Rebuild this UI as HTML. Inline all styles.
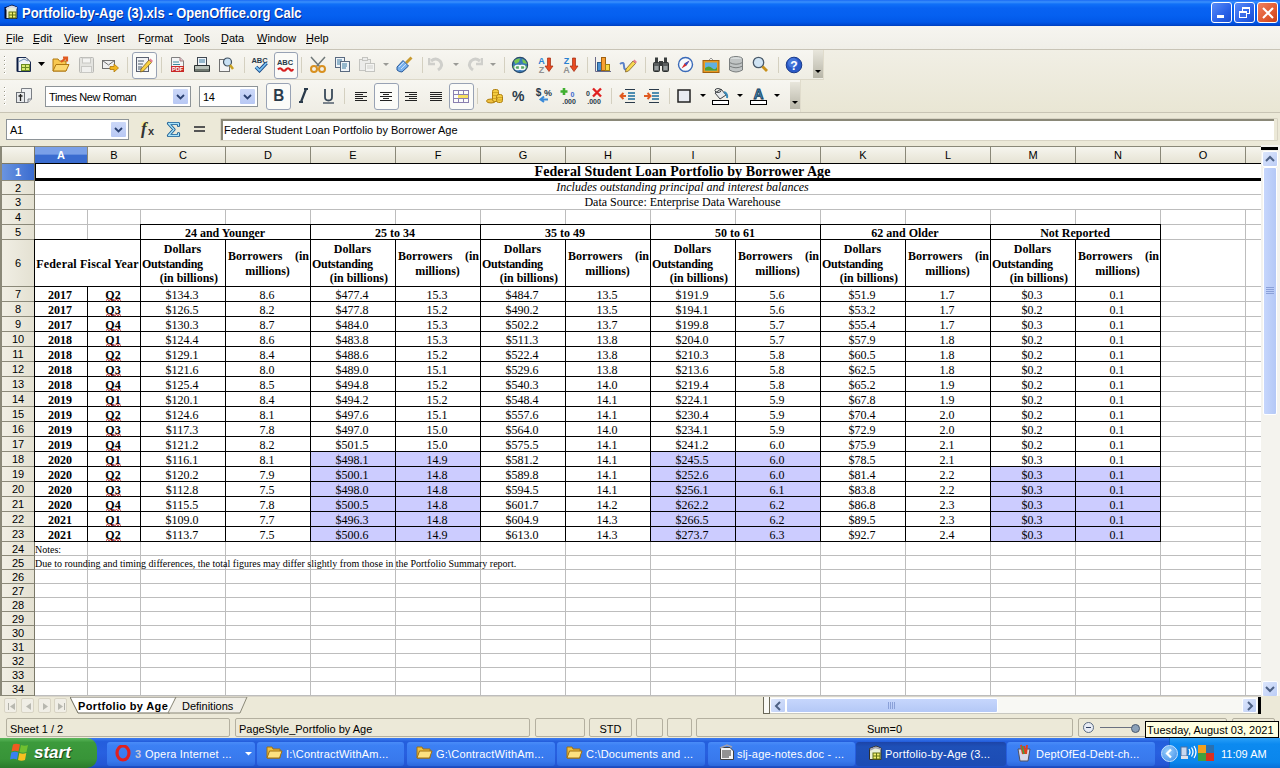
<!DOCTYPE html><html><head><meta charset="utf-8"><style>
*{margin:0;padding:0;box-sizing:border-box}
body{width:1280px;height:768px;overflow:hidden;position:relative;background:#ece9d8;font-family:"Liberation Sans",sans-serif;font-size:11px;color:#000}
.a{position:absolute}
.ser{font-family:"Liberation Serif",serif}
.t{position:absolute;white-space:nowrap;line-height:1}
</style></head><body>
<div class="a" style="left:0;top:0;width:1280px;height:26px;background:linear-gradient(#1a6af4 0px,#3a90fc 2px,#1070f8 4px,#0862f2 8px,#0560f0 60%,#0258e8 85%,#0048d0 96%,#003cb8 100%)"></div>
<div class="t" style="left:22px;top:6px;font-size:14px;font-weight:bold;color:#fff;text-shadow:1px 1px #0a2a8a;transform:scaleX(0.926);transform-origin:0 0">Portfolio-by-Age (3).xls - OpenOffice.org Calc</div>
<svg class="a" style="left:4px;top:3px" width="15" height="17"><path d="M1.5 4.5L8 2L13 4V15.5H1.5Z" fill="#e8f0d8" stroke="#0a1a50"/><path d="M1.5 4V15.5" stroke="#000a30" stroke-width="2"/><path d="M2 6L7 3.5L13 5" stroke="#d0d8e8" stroke-width="1.5" fill="none"/><rect x="5" y="9" width="7" height="6" fill="#f0f070" stroke="#607010"/><path d="M8.5 9V15M5 12H12" stroke="#607010"/></svg>
<div class="a" style="left:1211px;top:2px;width:21px;height:21px;border:1px solid #fff;border-radius:3px;background:linear-gradient(135deg,#5a8cf8,#2a62e8 60%,#1a4ed0)"><div class="a" style="left:5px;top:12px;width:7px;height:3px;background:#fff"></div></div>
<div class="a" style="left:1234px;top:2px;width:21px;height:21px;border:1px solid #fff;border-radius:3px;background:linear-gradient(135deg,#5a8cf8,#2a62e8 60%,#1a4ed0)"><div class="a" style="left:7px;top:4px;width:8px;height:7px;border:1px solid #fff;border-top-width:2px"></div><div class="a" style="left:4px;top:8px;width:8px;height:7px;border:1px solid #fff;border-top-width:2px;background:#3a6ce8"></div></div>
<div class="a" style="left:1257px;top:2px;width:21px;height:21px;border:1px solid #fff;border-radius:3px;background:linear-gradient(135deg,#f08060,#e05a30 60%,#c84018)"><svg class="a" style="left:4px;top:4px" width="12" height="12"><path d="M1 1L11 11M11 1L1 11" stroke="#fff" stroke-width="2"/></svg></div>
<div class="a" style="left:0;top:26px;width:1280px;height:24px;background:linear-gradient(#f6f5f0,#f0efe8);border-bottom:1px solid #c8c4b6"></div>
<div class="t" style="left:6px;top:33px;font-size:11px;color:#000">File</div>
<div class="a" style="left:6px;top:43px;width:6px;height:1px;background:#000"></div>
<div class="t" style="left:33px;top:33px;font-size:11px;color:#000">Edit</div>
<div class="a" style="left:33px;top:43px;width:6px;height:1px;background:#000"></div>
<div class="t" style="left:64px;top:33px;font-size:11px;color:#000">View</div>
<div class="a" style="left:64px;top:43px;width:6px;height:1px;background:#000"></div>
<div class="t" style="left:97px;top:33px;font-size:11px;color:#000">Insert</div>
<div class="a" style="left:97px;top:43px;width:3px;height:1px;background:#000"></div>
<div class="t" style="left:138px;top:33px;font-size:11px;color:#000">Format</div>
<div class="a" style="left:145px;top:43px;width:6px;height:1px;background:#000"></div>
<div class="t" style="left:184px;top:33px;font-size:11px;color:#000">Tools</div>
<div class="a" style="left:184px;top:43px;width:6px;height:1px;background:#000"></div>
<div class="t" style="left:221px;top:33px;font-size:11px;color:#000">Data</div>
<div class="a" style="left:221px;top:43px;width:6px;height:1px;background:#000"></div>
<div class="t" style="left:257px;top:33px;font-size:11px;color:#000">Window</div>
<div class="a" style="left:257px;top:43px;width:9px;height:1px;background:#000"></div>
<div class="t" style="left:306px;top:33px;font-size:11px;color:#000">Help</div>
<div class="a" style="left:306px;top:43px;width:6px;height:1px;background:#000"></div>
<div class="a" style="left:0;top:50px;width:1280px;height:63px;background:linear-gradient(#f1efe5,#e9e6d4)"></div>
<div class="a" style="left:0;top:50px;width:824px;height:30px;background:linear-gradient(#f7f6f1,#efede4);border-bottom:1px solid #dcd8c8;border-right:1px solid #e0dccc"></div>
<div class="a" style="left:0;top:80px;width:801px;height:32px;background:linear-gradient(#f7f6f1,#efede4);border-right:1px solid #e0dccc"></div>
<div class="a" style="left:0;top:112px;width:1280px;height:1px;background:#c8c4b4"></div>
<div class="a" style="left:4px;top:56px;width:2px;height:2px;background:#9a9888;border-right:1px solid #fff;border-bottom:1px solid #fff"></div>
<div class="a" style="left:4px;top:60px;width:2px;height:2px;background:#9a9888;border-right:1px solid #fff;border-bottom:1px solid #fff"></div>
<div class="a" style="left:4px;top:64px;width:2px;height:2px;background:#9a9888;border-right:1px solid #fff;border-bottom:1px solid #fff"></div>
<div class="a" style="left:4px;top:68px;width:2px;height:2px;background:#9a9888;border-right:1px solid #fff;border-bottom:1px solid #fff"></div>
<div class="a" style="left:4px;top:72px;width:2px;height:2px;background:#9a9888;border-right:1px solid #fff;border-bottom:1px solid #fff"></div>
<div class="a" style="left:4px;top:87px;width:2px;height:2px;background:#9a9888;border-right:1px solid #fff;border-bottom:1px solid #fff"></div>
<div class="a" style="left:4px;top:91px;width:2px;height:2px;background:#9a9888;border-right:1px solid #fff;border-bottom:1px solid #fff"></div>
<div class="a" style="left:4px;top:95px;width:2px;height:2px;background:#9a9888;border-right:1px solid #fff;border-bottom:1px solid #fff"></div>
<div class="a" style="left:4px;top:99px;width:2px;height:2px;background:#9a9888;border-right:1px solid #fff;border-bottom:1px solid #fff"></div>
<div class="a" style="left:4px;top:103px;width:2px;height:2px;background:#9a9888;border-right:1px solid #fff;border-bottom:1px solid #fff"></div>
<div class="a" style="left:813px;top:50px;width:10px;height:28px;background:linear-gradient(#e8e6dc,#b8b6a8)"><div class="a" style="left:2px;top:20px;width:0;height:0;border-left:3px solid transparent;border-right:3px solid transparent;border-top:3px solid #000"></div></div>
<div class="a" style="left:790px;top:82px;width:10px;height:27px;background:linear-gradient(#e8e6dc,#b8b6a8)"><div class="a" style="left:2px;top:19px;width:0;height:0;border-left:3px solid transparent;border-right:3px solid transparent;border-top:3px solid #000"></div></div>
<div class="a" style="left:127px;top:57px;width:1px;height:16px;background:#d4d0c0"></div>
<div class="a" style="left:161px;top:57px;width:1px;height:16px;background:#d4d0c0"></div>
<div class="a" style="left:244px;top:57px;width:1px;height:16px;background:#d4d0c0"></div>
<div class="a" style="left:301px;top:57px;width:1px;height:16px;background:#d4d0c0"></div>
<div class="a" style="left:422px;top:57px;width:1px;height:16px;background:#d4d0c0"></div>
<div class="a" style="left:504px;top:57px;width:1px;height:16px;background:#d4d0c0"></div>
<div class="a" style="left:587px;top:57px;width:1px;height:16px;background:#d4d0c0"></div>
<div class="a" style="left:645px;top:57px;width:1px;height:16px;background:#d4d0c0"></div>
<div class="a" style="left:778px;top:57px;width:1px;height:16px;background:#d4d0c0"></div>
<div class="a" style="left:344px;top:88px;width:1px;height:16px;background:#d4d0c0"></div>
<div class="a" style="left:477px;top:88px;width:1px;height:16px;background:#d4d0c0"></div>
<div class="a" style="left:611px;top:88px;width:1px;height:16px;background:#d4d0c0"></div>
<div class="a" style="left:669px;top:88px;width:1px;height:16px;background:#d4d0c0"></div>
<div class="a" style="left:132px;top:52px;width:25px;height:27px;border:1px solid #98a2b4;border-radius:3px;background:#fbfbf8"></div>
<div class="a" style="left:274px;top:52px;width:24px;height:27px;border:1px solid #98a2b4;border-radius:3px;background:#fbfbf8"></div>
<div class="a" style="left:266px;top:83px;width:25px;height:27px;border:1px solid #98a2b4;border-radius:3px;background:#fbfbf8"></div>
<div class="a" style="left:374px;top:83px;width:25px;height:27px;border:1px solid #98a2b4;border-radius:3px;background:#fbfbf8"></div>
<div class="a" style="left:449px;top:83px;width:25px;height:27px;border:1px solid #98a2b4;border-radius:3px;background:#fbfbf8"></div>
<div class="a" style="left:45px;top:86px;width:146px;height:21px;background:#fff;border:1px solid #8e9498"></div>
<div class="t" style="left:49px;top:92px;font-size:11px;letter-spacing:-0.4px">Times New Roman</div>
<div class="a" style="left:173px;top:89px;width:15px;height:15px;background:linear-gradient(#ccd8f8,#b8c8f4);border-radius:1px"><svg class="a" style="left:3px;top:5px" width="9" height="6"><path d="M1 1L4.5 4.5L8 1" stroke="#2a4070" stroke-width="1.8" fill="none"/></svg></div>
<div class="a" style="left:199px;top:86px;width:59px;height:21px;background:#fff;border:1px solid #8e9498"></div>
<div class="t" style="left:203px;top:92px;font-size:11px;letter-spacing:-0.4px">14</div>
<div class="a" style="left:240px;top:89px;width:15px;height:15px;background:linear-gradient(#ccd8f8,#b8c8f4);border-radius:1px"><svg class="a" style="left:3px;top:5px" width="9" height="6"><path d="M1 1L4.5 4.5L8 1" stroke="#2a4070" stroke-width="1.8" fill="none"/></svg></div>
<div class="a" style="left:0;top:113px;width:1280px;height:34px;background:#ece9d8"></div>
<div class="a" style="left:6px;top:119px;width:123px;height:21px;background:#fff;border:1px solid #8e9498"></div>
<div class="t" style="left:10px;top:125px;font-size:11px;letter-spacing:-0.4px">A1</div>
<div class="a" style="left:111px;top:122px;width:15px;height:15px;background:linear-gradient(#ccd8f8,#b8c8f4);border-radius:1px"><svg class="a" style="left:3px;top:5px" width="9" height="6"><path d="M1 1L4.5 4.5L8 1" stroke="#2a4070" stroke-width="1.8" fill="none"/></svg></div>
<div class="a" style="left:220px;top:118px;width:57px;height:22px"></div>
<div class="a" style="left:220px;top:118px;width:1058px;height:23px;border:1px solid #d8d4c4;border-radius:1px"></div><div class="a" style="left:221px;top:119px;width:1053px;height:21px;background:#fff;border-top:2px solid #8a8878;border-left:2px solid #8a8878"></div>
<div class="t" style="left:224px;top:125px;font-size:11px">Federal Student Loan Portfolio by Borrower Age</div>
<div class="a" style="left:141px;top:121px;width:7px;height:7px;border-radius:50%;background:radial-gradient(#f8f070,rgba(248,240,112,0))"></div><div class="t ser" style="left:141px;top:120px;font-size:17px;font-style:italic;font-weight:bold;color:#333">f</div><div class="t" style="left:148px;top:126px;font-size:11px;font-weight:bold;color:#333">x</div>
<svg class="a" style="left:165px;top:121px" width="17" height="17"><path d="M3.5 2.5H13.5V4.5M3.5 2.5L9 8.5L3.5 14.5H13.5V12.5" stroke="#1a5a90" stroke-width="3.2" fill="none" stroke-linejoin="round" stroke-linecap="round"/><path d="M3.5 2.5H13.5V4.5M3.5 2.5L9 8.5L3.5 14.5H13.5V12.5" stroke="#a8e4fa" stroke-width="1.3" fill="none" stroke-linejoin="round" stroke-linecap="round"/></svg>
<div class="a" style="left:194px;top:126px;width:11px;height:2px;background:#555"></div><div class="a" style="left:194px;top:130px;width:11px;height:2px;background:#555"></div>
<svg class="a" style="left:16px;top:56px" width="16" height="17" viewBox="0 0 16 17"><path d="M1.5 1.5H10L14.5 6V15.5H1.5Z" fill="#eef2f6" stroke="#1a2a50"/><path d="M1.5 1.5V15.5" stroke="#0a1a40" stroke-width="2"/><path d="M2 6L8 3L12 5" stroke="#7090b0" fill="none"/><rect x="5.5" y="8.5" width="8" height="6" fill="#d8ea70" stroke="#6a8a20"/><path d="M9.5 8.5V14.5M5.5 11.5H13.5" stroke="#6a8a20"/></svg>
<svg class="a" style="left:38px;top:62px" width="7" height="5" viewBox="0 0 7 5"><path d="M0 0H7L3.5 4Z" fill="#000"/></svg>
<svg class="a" style="left:52px;top:56px" width="18" height="17" viewBox="0 0 18 17"><path d="M1 3H6L7.5 5H14V15H1Z" fill="#f8c850" stroke="#b07810"/><path d="M1 15L4 8.5H17L14 15Z" fill="#fcd870" stroke="#b07810"/><path d="M9 6L14.5 1.5M11 1.5H15V5.5" stroke="#e05a20" stroke-width="2.2" fill="none"/></svg>
<svg class="a" style="left:79px;top:57px" width="15" height="16" viewBox="0 0 15 16"><rect x="0.5" y="0.5" width="14" height="15" rx="1" fill="#e4e4e0" stroke="#b8b8b4"/><rect x="3.5" y="1" width="8" height="5" fill="#f4f4f2" stroke="#c8c8c4"/><rect x="2.5" y="9.5" width="10" height="6" fill="#f0f0ee" stroke="#c8c8c4"/></svg>
<svg class="a" style="left:102px;top:60px" width="18" height="12" viewBox="0 0 18 12"><rect x="0.5" y="0.5" width="12" height="8" fill="#f0f0f0" stroke="#707070"/><path d="M0.5 0.5L6.5 5L12.5 0.5" stroke="#707070" fill="none"/><path d="M8 6.5H12V4L16.5 8L12 12V9.5H8Z" fill="#f4b820" stroke="#b07808" stroke-width="0.8"/></svg>
<svg class="a" style="left:135px;top:56px" width="18" height="17" viewBox="0 0 18 17"><rect x="1.5" y="1.5" width="12" height="14" fill="#f0f2f4" stroke="#5a6070"/><path d="M3 5H9M3 8H8M3 11H7M3 13H7" stroke="#4a5a6a"/><path d="M6 13L14 4L16.5 6.5L8.5 15L5.5 16Z" fill="#f8d040" stroke="#806020" stroke-width="0.8"/><path d="M14 4L15.5 2.5L18 5L16.5 6.5Z" fill="#e88090"/></svg>
<svg class="a" style="left:170px;top:56px" width="15" height="17" viewBox="0 0 15 17"><path d="M1.5 1.5H10L13.5 5V15.5H1.5Z" fill="#f4f4f4" stroke="#808080"/><path d="M10 1.5V5H13.5" fill="#e8c0c8" stroke="#a08080"/><path d="M3 6H9M3 8.5H10" stroke="#3a8aa0"/><rect x="1" y="10" width="13" height="6" fill="#c82828"/><text x="7.5" y="15" font-size="5.5" font-weight="bold" fill="#fff" text-anchor="middle" font-family="Liberation Sans">PDF</text></svg>
<svg class="a" style="left:193px;top:56px" width="18" height="17" viewBox="0 0 18 17"><rect x="4.5" y="1.5" width="9" height="8" fill="#f0f4f8" stroke="#404850"/><path d="M6 4H12M6 6H12" stroke="#3a7aa0"/><path d="M1.5 9.5H16.5V15.5H1.5Z" fill="#b8c0b8" stroke="#2a3030"/><rect x="2" y="13" width="14" height="2.5" fill="#707870"/></svg>
<svg class="a" style="left:218px;top:56px" width="16" height="17" viewBox="0 0 16 17"><rect x="1.5" y="3.5" width="10" height="12" fill="#f4f4f4" stroke="#707070"/><circle cx="9.5" cy="6" r="4" fill="#c8e0f4" stroke="#405060" stroke-width="1.2"/><path d="M12 9L15 13" stroke="#c8a020" stroke-width="2.5"/></svg>
<svg class="a" style="left:251px;top:56px" width="18" height="17" viewBox="0 0 18 17"><text x="8.5" y="7" font-size="7.5" font-weight="bold" fill="#2a3a4a" text-anchor="middle" font-family="Liberation Sans">ABC</text><path d="M5 11L8.5 14.5L15.5 7" stroke="#1a4a8a" stroke-width="3.6" fill="none"/><path d="M5 11L8.5 14.5L15.5 7" stroke="#7ac4f4" stroke-width="1.8" fill="none"/></svg>
<svg class="a" style="left:276px;top:57px" width="18" height="16" viewBox="0 0 18 16"><text x="9" y="8" font-size="7.5" font-weight="bold" fill="#2a3a4a" text-anchor="middle" font-family="Liberation Sans">ABC</text><path d="M2 12.5Q4 10 6 12.5T10 12.5T14 12.5T17 12" stroke="#d82020" stroke-width="2.2" fill="none"/></svg>
<svg class="a" style="left:309px;top:56px" width="18" height="17" viewBox="0 0 18 17"><path d="M2 1L11 11M16 1L7 11" stroke="#707878" stroke-width="1.5"/><circle cx="5" cy="13" r="3" fill="none" stroke="#d89020" stroke-width="2"/><circle cx="13" cy="13" r="3" fill="none" stroke="#d89020" stroke-width="2"/></svg>
<svg class="a" style="left:334px;top:56px" width="17" height="17" viewBox="0 0 17 17"><rect x="1.5" y="1.5" width="9" height="10" fill="#f0f4f8" stroke="#5a6a80"/><path d="M3 4H8M3 6H8M3 8H7" stroke="#3a7aa0"/><rect x="6.5" y="5.5" width="9" height="10" fill="#f0f4f8" stroke="#5a6a80"/><path d="M8 8H13M8 10H13M8 12H12" stroke="#3a7aa0"/></svg>
<svg class="a" style="left:358px;top:56px" width="18" height="17" viewBox="0 0 18 17"><rect x="1.5" y="3.5" width="11" height="11" fill="#ececea" stroke="#c4c4c0"/><rect x="4.5" y="1.5" width="5" height="3" fill="#ececea" stroke="#c4c4c0"/><rect x="7.5" y="7.5" width="9" height="8" fill="#f4f4f2" stroke="#c4c4c0"/><path d="M9 10H15M9 12H15" stroke="#d0d0cc"/></svg>
<svg class="a" style="left:383px;top:63px" width="6" height="4" viewBox="0 0 6 4"><path d="M0 0H6L3 3Z" fill="#9a9a96"/></svg>
<svg class="a" style="left:396px;top:56px" width="18" height="17" viewBox="0 0 18 17"><path d="M10 7L15.5 1.5" stroke="#c89a30" stroke-width="2.8"/><path d="M1 11L7 4.5L12.5 10L6 16Q3 16 1 14Z" fill="#78b0ec" stroke="#2a5a9a"/><path d="M3 11L8 6M5 13L10 8" stroke="#c8e0fa"/></svg>
<svg class="a" style="left:428px;top:56px" width="18" height="17" viewBox="0 0 18 17"><path d="M3 5Q8 1 12 5Q16 10 10 14" stroke="#cfcfcb" stroke-width="3" fill="none"/><path d="M1 2V8H7" stroke="#cfcfcb" stroke-width="2.5" fill="none"/></svg>
<svg class="a" style="left:453px;top:63px" width="6" height="4" viewBox="0 0 6 4"><path d="M0 0H6L3 3Z" fill="#9a9a96"/></svg>
<svg class="a" style="left:465px;top:56px" width="18" height="17" viewBox="0 0 18 17"><path d="M15 5Q10 1 6 5Q2 10 8 14" stroke="#cfcfcb" stroke-width="3" fill="none"/><path d="M17 2V8H11" stroke="#cfcfcb" stroke-width="2.5" fill="none"/></svg>
<svg class="a" style="left:490px;top:63px" width="6" height="4" viewBox="0 0 6 4"><path d="M0 0H6L3 3Z" fill="#9a9a96"/></svg>
<svg class="a" style="left:511px;top:56px" width="18" height="18" viewBox="0 0 18 18"><circle cx="9" cy="9" r="7.6" fill="#3a7ab8" stroke="#2a4a6a" stroke-width="1.2"/><path d="M3 5Q5 2 9 2.5L8 6L4.5 8Z M11 3Q15 4 16 8L12 7Z" fill="#78c850"/><path d="M2 10Q9 7 16 10V12Q9 16 2 12Z" fill="#5aa860"/><rect x="4" y="9.5" width="5.5" height="4" rx="2" fill="none" stroke="#f4f8fc" stroke-width="1.4"/><rect x="8.5" y="9.5" width="5.5" height="4" rx="2" fill="none" stroke="#f4f8fc" stroke-width="1.4"/></svg>
<svg class="a" style="left:537px;top:56px" width="17" height="17" viewBox="0 0 17 17"><text x="4.5" y="8" font-size="9" font-weight="bold" fill="#2a80d0" text-anchor="middle" font-family="Liberation Sans">A</text><text x="4.5" y="16.5" font-size="9" font-weight="bold" fill="#909090" text-anchor="middle" font-family="Liberation Sans">Z</text><path d="M10.5 2H13.5V10H16L12 15.5L8 10H10.5Z" fill="#e84a20" stroke="#a02a10" stroke-width="0.7"/></svg>
<svg class="a" style="left:562px;top:56px" width="17" height="17" viewBox="0 0 17 17"><text x="4.5" y="8" font-size="9" font-weight="bold" fill="#2a80d0" text-anchor="middle" font-family="Liberation Sans">Z</text><text x="4.5" y="16.5" font-size="9" font-weight="bold" fill="#909090" text-anchor="middle" font-family="Liberation Sans">A</text><path d="M10.5 2H13.5V10H16L12 15.5L8 10H10.5Z" fill="#e84a20" stroke="#a02a10" stroke-width="0.7"/></svg>
<svg class="a" style="left:594px;top:56px" width="18" height="17" viewBox="0 0 18 17"><path d="M1.5 1V15.5H17" stroke="#6a6a8a" fill="none"/><rect x="3.5" y="6.5" width="4" height="8" fill="#4a90d0" stroke="#2a5a8a"/><rect x="7.5" y="1.5" width="4" height="13" fill="#f8a030" stroke="#a06010"/><rect x="11.5" y="8.5" width="4" height="6" fill="#f8d840" stroke="#a08010"/></svg>
<svg class="a" style="left:619px;top:56px" width="18" height="17" viewBox="0 0 18 17"><path d="M1 8Q5 5 5 10Q5 15 9 13" stroke="#5a80c8" stroke-width="2" fill="none"/><path d="M7 13L14 5L16.5 7.5L9.5 15L6.5 16Z" fill="#f8d850" stroke="#806020" stroke-width="0.8"/><path d="M14 5L15.5 3.5L18 6L16.5 7.5Z" fill="#e88090"/></svg>
<svg class="a" style="left:652px;top:56px" width="18" height="17" viewBox="0 0 18 17"><rect x="1.5" y="6.5" width="6" height="9" rx="1" fill="#5a5e5e" stroke="#2a2e2e"/><rect x="10.5" y="6.5" width="6" height="9" rx="1" fill="#5a5e5e" stroke="#2a2e2e"/><rect x="3" y="1.5" width="3" height="5" fill="#3a3e3e"/><rect x="12" y="1.5" width="3" height="5" fill="#3a3e3e"/><rect x="7" y="5" width="4" height="5" fill="#3a3e3e"/><rect x="2.5" y="10" width="4" height="4" fill="#9aa0a0"/><rect x="11.5" y="10" width="4" height="4" fill="#9aa0a0"/></svg>
<svg class="a" style="left:677px;top:56px" width="17" height="17" viewBox="0 0 17 17"><circle cx="8.5" cy="8.5" r="7" fill="#f8fafc" stroke="#3a6ab8" stroke-width="1.4"/><path d="M12.5 4.5L7.5 7.5L4.5 12.5L9.5 9.5Z" fill="#d82a2a"/><path d="M12.5 4.5L9.5 9.5L7.5 7.5Z" fill="#3a5ac8"/></svg>
<svg class="a" style="left:702px;top:57px" width="18" height="16" viewBox="0 0 18 16"><path d="M6 4L9 1L12 4" stroke="#9a9a9a" fill="none"/><rect x="1" y="3.5" width="16" height="12" fill="#e89a20" stroke="#a06010"/><rect x="3" y="5.5" width="12" height="8" fill="#60b0e0"/><path d="M3 11Q7 8 10 11T15 10V13.5H3Z" fill="#50a030"/></svg>
<svg class="a" style="left:728px;top:56px" width="16" height="17" viewBox="0 0 16 17"><ellipse cx="8" cy="3" rx="6.5" ry="2.5" fill="#d8dcdc" stroke="#7a7e7e"/><path d="M1.5 3V14Q8 18 14.5 14V3" fill="#c0c4c4" stroke="#7a7e7e"/><path d="M1.5 6.5Q8 10 14.5 6.5M1.5 10Q8 13.5 14.5 10" stroke="#7a7e7e" fill="none"/></svg>
<svg class="a" style="left:752px;top:56px" width="17" height="17" viewBox="0 0 17 17"><circle cx="6.5" cy="6.5" r="5.2" fill="#d0e4f4" stroke="#4a5a6a" stroke-width="1.3"/><path d="M10.5 10.5L15 15" stroke="#c8901a" stroke-width="2.8"/></svg>
<svg class="a" style="left:785px;top:56px" width="18" height="18" viewBox="0 0 18 18"><circle cx="9" cy="9" r="7.8" fill="#2a5ac8" stroke="#1a3a8a"/><circle cx="8" cy="7" r="5" fill="#5a8ae8" opacity="0.6"/><text x="9" y="13.5" font-size="12" font-weight="bold" fill="#fff" text-anchor="middle" font-family="Liberation Sans">?</text></svg>
<svg class="a" style="left:16px;top:88px" width="17" height="16" viewBox="0 0 17 16"><path d="M5.5 0.5H15.5V11L12 14.5H5.5Z" fill="#eef0f2" stroke="#7a7e84"/><path d="M12 14.5V11H15.5" fill="#d8dce0" stroke="#7a7e84"/><rect x="0.5" y="4.5" width="8" height="10" fill="#e8eaec" stroke="#6a6e74"/><path d="M4.5 6V13M2.5 8H6.5" stroke="#222" stroke-width="1.3"/></svg>
<div class="t" style="left:273px;top:88px;font-size:16px;font-weight:bold;color:#2a3a4a;transform:scaleX(0.95)">B</div>
<svg class="a" style="left:297px;top:88px" width="12" height="15" viewBox="0 0 12 15"><path d="M7 1H11M2 14H6M9 1L4 14" stroke="#2a3a4a" stroke-width="2.2"/></svg>
<svg class="a" style="left:322px;top:88px" width="13" height="16" viewBox="0 0 13 16"><path d="M3 1V9Q3 12.5 6.5 12.5Q10 12.5 10 9V1" stroke="#3a4a5a" stroke-width="1.8" fill="none"/><path d="M1 15H12" stroke="#3a4a5a" stroke-width="1.3"/></svg>
<svg class="a" style="left:355px;top:92px" width="13" height="10" viewBox="0 0 13 10"><rect x="0" y="0" width="12" height="1" fill="#222"/><rect x="0" y="2" width="8" height="1" fill="#222"/><rect x="0" y="4" width="12" height="1" fill="#222"/><rect x="0" y="6" width="8" height="1" fill="#222"/><rect x="0" y="8" width="12" height="1" fill="#222"/></svg>
<svg class="a" style="left:380px;top:92px" width="13" height="10" viewBox="0 0 13 10"><rect x="0" y="0" width="12" height="1" fill="#222"/><rect x="3" y="2" width="6" height="1" fill="#222"/><rect x="0" y="4" width="12" height="1" fill="#222"/><rect x="3" y="6" width="6" height="1" fill="#222"/><rect x="0" y="8" width="12" height="1" fill="#222"/></svg>
<svg class="a" style="left:405px;top:92px" width="13" height="10" viewBox="0 0 13 10"><rect x="0" y="0" width="12" height="1" fill="#222"/><rect x="4" y="2" width="8" height="1" fill="#222"/><rect x="0" y="4" width="12" height="1" fill="#222"/><rect x="4" y="6" width="8" height="1" fill="#222"/><rect x="0" y="8" width="12" height="1" fill="#222"/></svg>
<svg class="a" style="left:430px;top:92px" width="13" height="10" viewBox="0 0 13 10"><rect x="0" y="0" width="12" height="1" fill="#222"/><rect x="0" y="2" width="12" height="1" fill="#222"/><rect x="0" y="4" width="12" height="1" fill="#222"/><rect x="0" y="6" width="12" height="1" fill="#222"/><rect x="0" y="8" width="12" height="1" fill="#222"/></svg>
<svg class="a" style="left:453px;top:90px" width="16" height="14" viewBox="0 0 16 14"><rect x="0.5" y="0.5" width="15" height="12" fill="#fcfcfc" stroke="#8a80b0"/><rect x="5" y="4" width="10" height="4" fill="#f8e060"/><path d="M0.5 4.5H15.5M0.5 8.5H15.5M5.5 0.5V4M10.5 0.5V4M5.5 8.5V12.5M10.5 8.5V12.5" stroke="#8a80b0"/></svg>
<svg class="a" style="left:486px;top:88px" width="17" height="16" viewBox="0 0 17 16"><ellipse cx="5" cy="13" rx="4.5" ry="2" fill="#f0c040" stroke="#b08010"/><rect x="6.5" y="1.5" width="6" height="12" rx="2" fill="#f4cc40" stroke="#b08010"/><rect x="10.5" y="6.5" width="6" height="8" rx="2" fill="#f4cc40" stroke="#b08010"/><path d="M7 4.5H12M7 7.5H12M7 10.5H12M11 9.5H16M11 12H16" stroke="#c89a20" stroke-width="0.8"/></svg>
<div class="t" style="left:512px;top:89px;font-size:14px;font-weight:bold;color:#2a3a4a">%</div>
<svg class="a" style="left:535px;top:87px" width="18" height="16" viewBox="0 0 18 16"><text x="3.5" y="9" font-size="10" font-weight="bold" fill="#2a3a4a" text-anchor="middle" font-family="Liberation Sans">$</text><text x="13" y="9" font-size="9" font-weight="bold" fill="#2a3a4a" text-anchor="middle" font-family="Liberation Sans">%</text><path d="M13 12.5H6M9 9.5L5.5 12.5L9 15" stroke="#3a8ad8" stroke-width="2" fill="none"/></svg>
<svg class="a" style="left:560px;top:87px" width="18" height="17" viewBox="0 0 18 17"><path d="M4 1V8M0.5 4.5H7.5" stroke="#40b030" stroke-width="2.6"/><text x="12.5" y="10" font-size="7" font-weight="bold" fill="#3a6ad0" text-anchor="middle" font-family="Liberation Sans">0</text><text x="9" y="16.5" font-size="7" font-weight="bold" fill="#2a3a4a" text-anchor="middle" font-family="Liberation Sans">.000</text></svg>
<svg class="a" style="left:585px;top:87px" width="18" height="17" viewBox="0 0 18 17"><text x="3" y="9" font-size="7" font-weight="bold" fill="#2a3a4a" text-anchor="middle" font-family="Liberation Sans">0</text><path d="M8 1.5L16 9.5M16 1.5L8 9.5" stroke="#e02020" stroke-width="2.4"/><text x="9" y="16.5" font-size="7" font-weight="bold" fill="#2a3a4a" text-anchor="middle" font-family="Liberation Sans">.000</text></svg>
<svg class="a" style="left:619px;top:88px" width="17" height="16" viewBox="0 0 17 16"><path d="M7 8H1.5M4.5 5L1.5 8L4.5 11" stroke="#e05a20" stroke-width="2" fill="none"/><path d="M6 1.5H16M9 5H16M9 8H16M9 11H16M6 14.5H16" stroke="#2a3a4a"/><path d="M9 5H16M9 8H16M9 11H16" stroke="#3a8ab8" stroke-width="1.3"/></svg>
<svg class="a" style="left:643px;top:88px" width="17" height="16" viewBox="0 0 17 16"><path d="M1 8H7M4.5 5L7.5 8L4.5 11" stroke="#e05a20" stroke-width="2" fill="none"/><path d="M6 1.5H16M9 5H16M9 8H16M9 11H16M6 14.5H16" stroke="#2a3a4a"/><path d="M9 5H16M9 8H16M9 11H16" stroke="#3a8ab8" stroke-width="1.3"/></svg>
<svg class="a" style="left:677px;top:89px" width="14" height="14" viewBox="0 0 14 14"><rect x="1" y="1" width="12" height="12" fill="#e8eaf0" stroke="#222" stroke-width="1.5"/></svg>
<svg class="a" style="left:700px;top:94px" width="6" height="4" viewBox="0 0 6 4"><path d="M0 0H6L3 3Z" fill="#000"/></svg>
<svg class="a" style="left:712px;top:87px" width="18" height="18" viewBox="0 0 18 18"><path d="M3 6L9 2L14 8L8 12Z" fill="#e8eaec" stroke="#404448"/><ellipse cx="6" cy="3.5" rx="3" ry="2" fill="none" stroke="#404448"/><path d="M12 5Q16 7 15 11" stroke="#3a8ab8" stroke-width="2" fill="none"/><rect x="0.5" y="13.5" width="16" height="4" fill="#fff" stroke="#000"/></svg>
<svg class="a" style="left:737px;top:94px" width="6" height="4" viewBox="0 0 6 4"><path d="M0 0H6L3 3Z" fill="#000"/></svg>
<svg class="a" style="left:750px;top:87px" width="18" height="18" viewBox="0 0 18 18"><text x="8.5" y="12" font-size="14" font-weight="bold" fill="#3a8ab8" stroke="#1a3a5a" stroke-width="0.8" text-anchor="middle" font-family="Liberation Sans">A</text><rect x="0.5" y="13.5" width="16" height="4" fill="#fff" stroke="#000"/></svg>
<svg class="a" style="left:774px;top:94px" width="6" height="4" viewBox="0 0 6 4"><path d="M0 0H6L3 3Z" fill="#000"/></svg>
<div class="a" style="left:0;top:146px;width:1261px;height:551px;background:#fff"></div>
<div class="a" style="left:0;top:146px;width:2px;height:551px;background:#8a8878"></div>
<div class="a" style="left:0;top:146px;width:1261px;height:1px;background:#8a8878"></div>
<div class="a" style="left:2px;top:147px;width:1259px;height:16px;background:linear-gradient(#f6f5ee,#e6e3d4)"></div>
<div class="a" style="left:2px;top:163px;width:32px;height:533px;background:linear-gradient(90deg,#f0eee4,#e4e1d2)"></div>
<div class="a" style="left:2px;top:163px;width:1259px;height:1px;background:#7a7868"></div>
<div class="a" style="left:34px;top:146px;width:1px;height:550px;background:#7a7868"></div>
<div class="a" style="left:35px;top:147px;width:52px;height:16px;background:linear-gradient(#7aa0e8 0%,#7aa0e8 45%,#3a6cd0 50%,#3a6cd0 100%)"></div>
<div class="a" style="left:2px;top:164px;width:32px;height:16px;background:linear-gradient(90deg,#6a94e0,#3a6cd0)"></div>
<div class="a" style="left:87px;top:147px;width:1px;height:16px;background:#8a8878"></div>
<div class="t" style="left:35px;width:52px;text-align:center;top:150px;font-size:11px;color:#fff;font-weight:bold">A</div>
<div class="a" style="left:140px;top:147px;width:1px;height:16px;background:#8a8878"></div>
<div class="t" style="left:88px;width:52px;text-align:center;top:150px;font-size:11px;color:#000;font-weight:normal">B</div>
<div class="a" style="left:225px;top:147px;width:1px;height:16px;background:#8a8878"></div>
<div class="t" style="left:141px;width:84px;text-align:center;top:150px;font-size:11px;color:#000;font-weight:normal">C</div>
<div class="a" style="left:310px;top:147px;width:1px;height:16px;background:#8a8878"></div>
<div class="t" style="left:226px;width:84px;text-align:center;top:150px;font-size:11px;color:#000;font-weight:normal">D</div>
<div class="a" style="left:395px;top:147px;width:1px;height:16px;background:#8a8878"></div>
<div class="t" style="left:311px;width:84px;text-align:center;top:150px;font-size:11px;color:#000;font-weight:normal">E</div>
<div class="a" style="left:480px;top:147px;width:1px;height:16px;background:#8a8878"></div>
<div class="t" style="left:396px;width:84px;text-align:center;top:150px;font-size:11px;color:#000;font-weight:normal">F</div>
<div class="a" style="left:565px;top:147px;width:1px;height:16px;background:#8a8878"></div>
<div class="t" style="left:481px;width:84px;text-align:center;top:150px;font-size:11px;color:#000;font-weight:normal">G</div>
<div class="a" style="left:650px;top:147px;width:1px;height:16px;background:#8a8878"></div>
<div class="t" style="left:566px;width:84px;text-align:center;top:150px;font-size:11px;color:#000;font-weight:normal">H</div>
<div class="a" style="left:735px;top:147px;width:1px;height:16px;background:#8a8878"></div>
<div class="t" style="left:651px;width:84px;text-align:center;top:150px;font-size:11px;color:#000;font-weight:normal">I</div>
<div class="a" style="left:820px;top:147px;width:1px;height:16px;background:#8a8878"></div>
<div class="t" style="left:736px;width:84px;text-align:center;top:150px;font-size:11px;color:#000;font-weight:normal">J</div>
<div class="a" style="left:905px;top:147px;width:1px;height:16px;background:#8a8878"></div>
<div class="t" style="left:821px;width:84px;text-align:center;top:150px;font-size:11px;color:#000;font-weight:normal">K</div>
<div class="a" style="left:990px;top:147px;width:1px;height:16px;background:#8a8878"></div>
<div class="t" style="left:906px;width:84px;text-align:center;top:150px;font-size:11px;color:#000;font-weight:normal">L</div>
<div class="a" style="left:1075px;top:147px;width:1px;height:16px;background:#8a8878"></div>
<div class="t" style="left:991px;width:84px;text-align:center;top:150px;font-size:11px;color:#000;font-weight:normal">M</div>
<div class="a" style="left:1160px;top:147px;width:1px;height:16px;background:#8a8878"></div>
<div class="t" style="left:1076px;width:84px;text-align:center;top:150px;font-size:11px;color:#000;font-weight:normal">N</div>
<div class="a" style="left:1245px;top:147px;width:1px;height:16px;background:#8a8878"></div>
<div class="t" style="left:1161px;width:84px;text-align:center;top:150px;font-size:11px;color:#000;font-weight:normal">O</div>
<div class="a" style="left:1246px;top:147px;width:15px;height:16px;background:linear-gradient(#f6f5ee,#e6e3d4)"></div>
<div class="a" style="left:2px;top:180px;width:32px;height:1px;background:#8a8878"></div>
<div class="t" style="left:2px;width:32px;text-align:center;top:167px;font-size:11px;color:#fff;font-weight:bold">1</div>
<div class="a" style="left:2px;top:194px;width:32px;height:1px;background:#8a8878"></div>
<div class="t" style="left:2px;width:32px;text-align:center;top:183px;font-size:11px;color:#000;font-weight:normal">2</div>
<div class="a" style="left:2px;top:209px;width:32px;height:1px;background:#8a8878"></div>
<div class="t" style="left:2px;width:32px;text-align:center;top:197px;font-size:11px;color:#000;font-weight:normal">3</div>
<div class="a" style="left:2px;top:224px;width:32px;height:1px;background:#8a8878"></div>
<div class="t" style="left:2px;width:32px;text-align:center;top:212px;font-size:11px;color:#000;font-weight:normal">4</div>
<div class="a" style="left:2px;top:239px;width:32px;height:1px;background:#8a8878"></div>
<div class="t" style="left:2px;width:32px;text-align:center;top:227px;font-size:11px;color:#000;font-weight:normal">5</div>
<div class="a" style="left:2px;top:286px;width:32px;height:1px;background:#8a8878"></div>
<div class="t" style="left:2px;width:32px;text-align:center;top:258px;font-size:11px;color:#000;font-weight:normal">6</div>
<div class="a" style="left:2px;top:301px;width:32px;height:1px;background:#8a8878"></div>
<div class="t" style="left:2px;width:32px;text-align:center;top:289px;font-size:11px;color:#000;font-weight:normal">7</div>
<div class="a" style="left:2px;top:316px;width:32px;height:1px;background:#8a8878"></div>
<div class="t" style="left:2px;width:32px;text-align:center;top:304px;font-size:11px;color:#000;font-weight:normal">8</div>
<div class="a" style="left:2px;top:331px;width:32px;height:1px;background:#8a8878"></div>
<div class="t" style="left:2px;width:32px;text-align:center;top:319px;font-size:11px;color:#000;font-weight:normal">9</div>
<div class="a" style="left:2px;top:346px;width:32px;height:1px;background:#8a8878"></div>
<div class="t" style="left:2px;width:32px;text-align:center;top:334px;font-size:11px;color:#000;font-weight:normal">10</div>
<div class="a" style="left:2px;top:361px;width:32px;height:1px;background:#8a8878"></div>
<div class="t" style="left:2px;width:32px;text-align:center;top:349px;font-size:11px;color:#000;font-weight:normal">11</div>
<div class="a" style="left:2px;top:376px;width:32px;height:1px;background:#8a8878"></div>
<div class="t" style="left:2px;width:32px;text-align:center;top:364px;font-size:11px;color:#000;font-weight:normal">12</div>
<div class="a" style="left:2px;top:391px;width:32px;height:1px;background:#8a8878"></div>
<div class="t" style="left:2px;width:32px;text-align:center;top:379px;font-size:11px;color:#000;font-weight:normal">13</div>
<div class="a" style="left:2px;top:406px;width:32px;height:1px;background:#8a8878"></div>
<div class="t" style="left:2px;width:32px;text-align:center;top:394px;font-size:11px;color:#000;font-weight:normal">14</div>
<div class="a" style="left:2px;top:421px;width:32px;height:1px;background:#8a8878"></div>
<div class="t" style="left:2px;width:32px;text-align:center;top:409px;font-size:11px;color:#000;font-weight:normal">15</div>
<div class="a" style="left:2px;top:436px;width:32px;height:1px;background:#8a8878"></div>
<div class="t" style="left:2px;width:32px;text-align:center;top:424px;font-size:11px;color:#000;font-weight:normal">16</div>
<div class="a" style="left:2px;top:451px;width:32px;height:1px;background:#8a8878"></div>
<div class="t" style="left:2px;width:32px;text-align:center;top:439px;font-size:11px;color:#000;font-weight:normal">17</div>
<div class="a" style="left:2px;top:466px;width:32px;height:1px;background:#8a8878"></div>
<div class="t" style="left:2px;width:32px;text-align:center;top:454px;font-size:11px;color:#000;font-weight:normal">18</div>
<div class="a" style="left:2px;top:481px;width:32px;height:1px;background:#8a8878"></div>
<div class="t" style="left:2px;width:32px;text-align:center;top:469px;font-size:11px;color:#000;font-weight:normal">19</div>
<div class="a" style="left:2px;top:496px;width:32px;height:1px;background:#8a8878"></div>
<div class="t" style="left:2px;width:32px;text-align:center;top:484px;font-size:11px;color:#000;font-weight:normal">20</div>
<div class="a" style="left:2px;top:511px;width:32px;height:1px;background:#8a8878"></div>
<div class="t" style="left:2px;width:32px;text-align:center;top:499px;font-size:11px;color:#000;font-weight:normal">21</div>
<div class="a" style="left:2px;top:526px;width:32px;height:1px;background:#8a8878"></div>
<div class="t" style="left:2px;width:32px;text-align:center;top:514px;font-size:11px;color:#000;font-weight:normal">22</div>
<div class="a" style="left:2px;top:541px;width:32px;height:1px;background:#8a8878"></div>
<div class="t" style="left:2px;width:32px;text-align:center;top:529px;font-size:11px;color:#000;font-weight:normal">23</div>
<div class="a" style="left:2px;top:555px;width:32px;height:1px;background:#8a8878"></div>
<div class="t" style="left:2px;width:32px;text-align:center;top:544px;font-size:11px;color:#000;font-weight:normal">24</div>
<div class="a" style="left:2px;top:569px;width:32px;height:1px;background:#8a8878"></div>
<div class="t" style="left:2px;width:32px;text-align:center;top:558px;font-size:11px;color:#000;font-weight:normal">25</div>
<div class="a" style="left:2px;top:583px;width:32px;height:1px;background:#8a8878"></div>
<div class="t" style="left:2px;width:32px;text-align:center;top:572px;font-size:11px;color:#000;font-weight:normal">26</div>
<div class="a" style="left:2px;top:597px;width:32px;height:1px;background:#8a8878"></div>
<div class="t" style="left:2px;width:32px;text-align:center;top:586px;font-size:11px;color:#000;font-weight:normal">27</div>
<div class="a" style="left:2px;top:611px;width:32px;height:1px;background:#8a8878"></div>
<div class="t" style="left:2px;width:32px;text-align:center;top:600px;font-size:11px;color:#000;font-weight:normal">28</div>
<div class="a" style="left:2px;top:625px;width:32px;height:1px;background:#8a8878"></div>
<div class="t" style="left:2px;width:32px;text-align:center;top:614px;font-size:11px;color:#000;font-weight:normal">29</div>
<div class="a" style="left:2px;top:639px;width:32px;height:1px;background:#8a8878"></div>
<div class="t" style="left:2px;width:32px;text-align:center;top:628px;font-size:11px;color:#000;font-weight:normal">30</div>
<div class="a" style="left:2px;top:653px;width:32px;height:1px;background:#8a8878"></div>
<div class="t" style="left:2px;width:32px;text-align:center;top:642px;font-size:11px;color:#000;font-weight:normal">31</div>
<div class="a" style="left:2px;top:667px;width:32px;height:1px;background:#8a8878"></div>
<div class="t" style="left:2px;width:32px;text-align:center;top:656px;font-size:11px;color:#000;font-weight:normal">32</div>
<div class="a" style="left:2px;top:681px;width:32px;height:1px;background:#8a8878"></div>
<div class="t" style="left:2px;width:32px;text-align:center;top:670px;font-size:11px;color:#000;font-weight:normal">33</div>
<div class="a" style="left:2px;top:695px;width:32px;height:1px;background:#8a8878"></div>
<div class="t" style="left:2px;width:32px;text-align:center;top:684px;font-size:11px;color:#000;font-weight:normal">34</div>
<div class="a" style="left:310px;top:451px;width:170px;height:90px;background:#ccccff"></div>
<div class="a" style="left:650px;top:451px;width:170px;height:90px;background:#ccccff"></div>
<div class="a" style="left:990px;top:466px;width:170px;height:75px;background:#ccccff"></div>
<div class="a" style="left:35px;top:194px;width:1226px;height:1px;background:#bdbdbd"></div>
<div class="a" style="left:35px;top:209px;width:1226px;height:1px;background:#bdbdbd"></div>
<div class="a" style="left:35px;top:224px;width:1226px;height:1px;background:#bdbdbd"></div>
<div class="a" style="left:35px;top:239px;width:1226px;height:1px;background:#bdbdbd"></div>
<div class="a" style="left:35px;top:286px;width:1226px;height:1px;background:#bdbdbd"></div>
<div class="a" style="left:35px;top:301px;width:1226px;height:1px;background:#bdbdbd"></div>
<div class="a" style="left:35px;top:316px;width:1226px;height:1px;background:#bdbdbd"></div>
<div class="a" style="left:35px;top:331px;width:1226px;height:1px;background:#bdbdbd"></div>
<div class="a" style="left:35px;top:346px;width:1226px;height:1px;background:#bdbdbd"></div>
<div class="a" style="left:35px;top:361px;width:1226px;height:1px;background:#bdbdbd"></div>
<div class="a" style="left:35px;top:376px;width:1226px;height:1px;background:#bdbdbd"></div>
<div class="a" style="left:35px;top:391px;width:1226px;height:1px;background:#bdbdbd"></div>
<div class="a" style="left:35px;top:406px;width:1226px;height:1px;background:#bdbdbd"></div>
<div class="a" style="left:35px;top:421px;width:1226px;height:1px;background:#bdbdbd"></div>
<div class="a" style="left:35px;top:436px;width:1226px;height:1px;background:#bdbdbd"></div>
<div class="a" style="left:35px;top:451px;width:1226px;height:1px;background:#bdbdbd"></div>
<div class="a" style="left:35px;top:466px;width:1226px;height:1px;background:#bdbdbd"></div>
<div class="a" style="left:35px;top:481px;width:1226px;height:1px;background:#bdbdbd"></div>
<div class="a" style="left:35px;top:496px;width:1226px;height:1px;background:#bdbdbd"></div>
<div class="a" style="left:35px;top:511px;width:1226px;height:1px;background:#bdbdbd"></div>
<div class="a" style="left:35px;top:526px;width:1226px;height:1px;background:#bdbdbd"></div>
<div class="a" style="left:35px;top:541px;width:1226px;height:1px;background:#bdbdbd"></div>
<div class="a" style="left:35px;top:555px;width:1226px;height:1px;background:#bdbdbd"></div>
<div class="a" style="left:35px;top:569px;width:1226px;height:1px;background:#bdbdbd"></div>
<div class="a" style="left:35px;top:583px;width:1226px;height:1px;background:#bdbdbd"></div>
<div class="a" style="left:35px;top:597px;width:1226px;height:1px;background:#bdbdbd"></div>
<div class="a" style="left:35px;top:611px;width:1226px;height:1px;background:#bdbdbd"></div>
<div class="a" style="left:35px;top:625px;width:1226px;height:1px;background:#bdbdbd"></div>
<div class="a" style="left:35px;top:639px;width:1226px;height:1px;background:#bdbdbd"></div>
<div class="a" style="left:35px;top:653px;width:1226px;height:1px;background:#bdbdbd"></div>
<div class="a" style="left:35px;top:667px;width:1226px;height:1px;background:#bdbdbd"></div>
<div class="a" style="left:35px;top:681px;width:1226px;height:1px;background:#bdbdbd"></div>
<div class="a" style="left:35px;top:695px;width:1226px;height:1px;background:#bdbdbd"></div>
<div class="a" style="left:87px;top:210px;width:1px;height:14px;background:#bdbdbd"></div>
<div class="a" style="left:87px;top:225px;width:1px;height:14px;background:#bdbdbd"></div>
<div class="a" style="left:87px;top:287px;width:1px;height:14px;background:#bdbdbd"></div>
<div class="a" style="left:87px;top:302px;width:1px;height:14px;background:#bdbdbd"></div>
<div class="a" style="left:87px;top:317px;width:1px;height:14px;background:#bdbdbd"></div>
<div class="a" style="left:87px;top:332px;width:1px;height:14px;background:#bdbdbd"></div>
<div class="a" style="left:87px;top:347px;width:1px;height:14px;background:#bdbdbd"></div>
<div class="a" style="left:87px;top:362px;width:1px;height:14px;background:#bdbdbd"></div>
<div class="a" style="left:87px;top:377px;width:1px;height:14px;background:#bdbdbd"></div>
<div class="a" style="left:87px;top:392px;width:1px;height:14px;background:#bdbdbd"></div>
<div class="a" style="left:87px;top:407px;width:1px;height:14px;background:#bdbdbd"></div>
<div class="a" style="left:87px;top:422px;width:1px;height:14px;background:#bdbdbd"></div>
<div class="a" style="left:87px;top:437px;width:1px;height:14px;background:#bdbdbd"></div>
<div class="a" style="left:87px;top:452px;width:1px;height:14px;background:#bdbdbd"></div>
<div class="a" style="left:87px;top:467px;width:1px;height:14px;background:#bdbdbd"></div>
<div class="a" style="left:87px;top:482px;width:1px;height:14px;background:#bdbdbd"></div>
<div class="a" style="left:87px;top:497px;width:1px;height:14px;background:#bdbdbd"></div>
<div class="a" style="left:87px;top:512px;width:1px;height:14px;background:#bdbdbd"></div>
<div class="a" style="left:87px;top:527px;width:1px;height:14px;background:#bdbdbd"></div>
<div class="a" style="left:87px;top:542px;width:1px;height:13px;background:#bdbdbd"></div>
<div class="a" style="left:87px;top:556px;width:1px;height:13px;background:#bdbdbd"></div>
<div class="a" style="left:87px;top:570px;width:1px;height:13px;background:#bdbdbd"></div>
<div class="a" style="left:87px;top:584px;width:1px;height:13px;background:#bdbdbd"></div>
<div class="a" style="left:87px;top:598px;width:1px;height:13px;background:#bdbdbd"></div>
<div class="a" style="left:87px;top:612px;width:1px;height:13px;background:#bdbdbd"></div>
<div class="a" style="left:87px;top:626px;width:1px;height:13px;background:#bdbdbd"></div>
<div class="a" style="left:87px;top:640px;width:1px;height:13px;background:#bdbdbd"></div>
<div class="a" style="left:87px;top:654px;width:1px;height:13px;background:#bdbdbd"></div>
<div class="a" style="left:87px;top:668px;width:1px;height:13px;background:#bdbdbd"></div>
<div class="a" style="left:87px;top:682px;width:1px;height:13px;background:#bdbdbd"></div>
<div class="a" style="left:140px;top:210px;width:1px;height:14px;background:#bdbdbd"></div>
<div class="a" style="left:140px;top:225px;width:1px;height:14px;background:#bdbdbd"></div>
<div class="a" style="left:140px;top:240px;width:1px;height:46px;background:#bdbdbd"></div>
<div class="a" style="left:140px;top:287px;width:1px;height:14px;background:#bdbdbd"></div>
<div class="a" style="left:140px;top:302px;width:1px;height:14px;background:#bdbdbd"></div>
<div class="a" style="left:140px;top:317px;width:1px;height:14px;background:#bdbdbd"></div>
<div class="a" style="left:140px;top:332px;width:1px;height:14px;background:#bdbdbd"></div>
<div class="a" style="left:140px;top:347px;width:1px;height:14px;background:#bdbdbd"></div>
<div class="a" style="left:140px;top:362px;width:1px;height:14px;background:#bdbdbd"></div>
<div class="a" style="left:140px;top:377px;width:1px;height:14px;background:#bdbdbd"></div>
<div class="a" style="left:140px;top:392px;width:1px;height:14px;background:#bdbdbd"></div>
<div class="a" style="left:140px;top:407px;width:1px;height:14px;background:#bdbdbd"></div>
<div class="a" style="left:140px;top:422px;width:1px;height:14px;background:#bdbdbd"></div>
<div class="a" style="left:140px;top:437px;width:1px;height:14px;background:#bdbdbd"></div>
<div class="a" style="left:140px;top:452px;width:1px;height:14px;background:#bdbdbd"></div>
<div class="a" style="left:140px;top:467px;width:1px;height:14px;background:#bdbdbd"></div>
<div class="a" style="left:140px;top:482px;width:1px;height:14px;background:#bdbdbd"></div>
<div class="a" style="left:140px;top:497px;width:1px;height:14px;background:#bdbdbd"></div>
<div class="a" style="left:140px;top:512px;width:1px;height:14px;background:#bdbdbd"></div>
<div class="a" style="left:140px;top:527px;width:1px;height:14px;background:#bdbdbd"></div>
<div class="a" style="left:140px;top:542px;width:1px;height:13px;background:#bdbdbd"></div>
<div class="a" style="left:140px;top:556px;width:1px;height:13px;background:#bdbdbd"></div>
<div class="a" style="left:140px;top:570px;width:1px;height:13px;background:#bdbdbd"></div>
<div class="a" style="left:140px;top:584px;width:1px;height:13px;background:#bdbdbd"></div>
<div class="a" style="left:140px;top:598px;width:1px;height:13px;background:#bdbdbd"></div>
<div class="a" style="left:140px;top:612px;width:1px;height:13px;background:#bdbdbd"></div>
<div class="a" style="left:140px;top:626px;width:1px;height:13px;background:#bdbdbd"></div>
<div class="a" style="left:140px;top:640px;width:1px;height:13px;background:#bdbdbd"></div>
<div class="a" style="left:140px;top:654px;width:1px;height:13px;background:#bdbdbd"></div>
<div class="a" style="left:140px;top:668px;width:1px;height:13px;background:#bdbdbd"></div>
<div class="a" style="left:140px;top:682px;width:1px;height:13px;background:#bdbdbd"></div>
<div class="a" style="left:225px;top:210px;width:1px;height:14px;background:#bdbdbd"></div>
<div class="a" style="left:225px;top:240px;width:1px;height:46px;background:#bdbdbd"></div>
<div class="a" style="left:225px;top:287px;width:1px;height:14px;background:#bdbdbd"></div>
<div class="a" style="left:225px;top:302px;width:1px;height:14px;background:#bdbdbd"></div>
<div class="a" style="left:225px;top:317px;width:1px;height:14px;background:#bdbdbd"></div>
<div class="a" style="left:225px;top:332px;width:1px;height:14px;background:#bdbdbd"></div>
<div class="a" style="left:225px;top:347px;width:1px;height:14px;background:#bdbdbd"></div>
<div class="a" style="left:225px;top:362px;width:1px;height:14px;background:#bdbdbd"></div>
<div class="a" style="left:225px;top:377px;width:1px;height:14px;background:#bdbdbd"></div>
<div class="a" style="left:225px;top:392px;width:1px;height:14px;background:#bdbdbd"></div>
<div class="a" style="left:225px;top:407px;width:1px;height:14px;background:#bdbdbd"></div>
<div class="a" style="left:225px;top:422px;width:1px;height:14px;background:#bdbdbd"></div>
<div class="a" style="left:225px;top:437px;width:1px;height:14px;background:#bdbdbd"></div>
<div class="a" style="left:225px;top:452px;width:1px;height:14px;background:#bdbdbd"></div>
<div class="a" style="left:225px;top:467px;width:1px;height:14px;background:#bdbdbd"></div>
<div class="a" style="left:225px;top:482px;width:1px;height:14px;background:#bdbdbd"></div>
<div class="a" style="left:225px;top:497px;width:1px;height:14px;background:#bdbdbd"></div>
<div class="a" style="left:225px;top:512px;width:1px;height:14px;background:#bdbdbd"></div>
<div class="a" style="left:225px;top:527px;width:1px;height:14px;background:#bdbdbd"></div>
<div class="a" style="left:225px;top:542px;width:1px;height:13px;background:#bdbdbd"></div>
<div class="a" style="left:225px;top:556px;width:1px;height:13px;background:#bdbdbd"></div>
<div class="a" style="left:225px;top:570px;width:1px;height:13px;background:#bdbdbd"></div>
<div class="a" style="left:225px;top:584px;width:1px;height:13px;background:#bdbdbd"></div>
<div class="a" style="left:225px;top:598px;width:1px;height:13px;background:#bdbdbd"></div>
<div class="a" style="left:225px;top:612px;width:1px;height:13px;background:#bdbdbd"></div>
<div class="a" style="left:225px;top:626px;width:1px;height:13px;background:#bdbdbd"></div>
<div class="a" style="left:225px;top:640px;width:1px;height:13px;background:#bdbdbd"></div>
<div class="a" style="left:225px;top:654px;width:1px;height:13px;background:#bdbdbd"></div>
<div class="a" style="left:225px;top:668px;width:1px;height:13px;background:#bdbdbd"></div>
<div class="a" style="left:225px;top:682px;width:1px;height:13px;background:#bdbdbd"></div>
<div class="a" style="left:310px;top:210px;width:1px;height:14px;background:#bdbdbd"></div>
<div class="a" style="left:310px;top:225px;width:1px;height:14px;background:#bdbdbd"></div>
<div class="a" style="left:310px;top:240px;width:1px;height:46px;background:#bdbdbd"></div>
<div class="a" style="left:310px;top:287px;width:1px;height:14px;background:#bdbdbd"></div>
<div class="a" style="left:310px;top:302px;width:1px;height:14px;background:#bdbdbd"></div>
<div class="a" style="left:310px;top:317px;width:1px;height:14px;background:#bdbdbd"></div>
<div class="a" style="left:310px;top:332px;width:1px;height:14px;background:#bdbdbd"></div>
<div class="a" style="left:310px;top:347px;width:1px;height:14px;background:#bdbdbd"></div>
<div class="a" style="left:310px;top:362px;width:1px;height:14px;background:#bdbdbd"></div>
<div class="a" style="left:310px;top:377px;width:1px;height:14px;background:#bdbdbd"></div>
<div class="a" style="left:310px;top:392px;width:1px;height:14px;background:#bdbdbd"></div>
<div class="a" style="left:310px;top:407px;width:1px;height:14px;background:#bdbdbd"></div>
<div class="a" style="left:310px;top:422px;width:1px;height:14px;background:#bdbdbd"></div>
<div class="a" style="left:310px;top:437px;width:1px;height:14px;background:#bdbdbd"></div>
<div class="a" style="left:310px;top:452px;width:1px;height:14px;background:#bdbdbd"></div>
<div class="a" style="left:310px;top:467px;width:1px;height:14px;background:#bdbdbd"></div>
<div class="a" style="left:310px;top:482px;width:1px;height:14px;background:#bdbdbd"></div>
<div class="a" style="left:310px;top:497px;width:1px;height:14px;background:#bdbdbd"></div>
<div class="a" style="left:310px;top:512px;width:1px;height:14px;background:#bdbdbd"></div>
<div class="a" style="left:310px;top:527px;width:1px;height:14px;background:#bdbdbd"></div>
<div class="a" style="left:310px;top:542px;width:1px;height:13px;background:#bdbdbd"></div>
<div class="a" style="left:310px;top:556px;width:1px;height:13px;background:#bdbdbd"></div>
<div class="a" style="left:310px;top:570px;width:1px;height:13px;background:#bdbdbd"></div>
<div class="a" style="left:310px;top:584px;width:1px;height:13px;background:#bdbdbd"></div>
<div class="a" style="left:310px;top:598px;width:1px;height:13px;background:#bdbdbd"></div>
<div class="a" style="left:310px;top:612px;width:1px;height:13px;background:#bdbdbd"></div>
<div class="a" style="left:310px;top:626px;width:1px;height:13px;background:#bdbdbd"></div>
<div class="a" style="left:310px;top:640px;width:1px;height:13px;background:#bdbdbd"></div>
<div class="a" style="left:310px;top:654px;width:1px;height:13px;background:#bdbdbd"></div>
<div class="a" style="left:310px;top:668px;width:1px;height:13px;background:#bdbdbd"></div>
<div class="a" style="left:310px;top:682px;width:1px;height:13px;background:#bdbdbd"></div>
<div class="a" style="left:395px;top:210px;width:1px;height:14px;background:#bdbdbd"></div>
<div class="a" style="left:395px;top:240px;width:1px;height:46px;background:#bdbdbd"></div>
<div class="a" style="left:395px;top:287px;width:1px;height:14px;background:#bdbdbd"></div>
<div class="a" style="left:395px;top:302px;width:1px;height:14px;background:#bdbdbd"></div>
<div class="a" style="left:395px;top:317px;width:1px;height:14px;background:#bdbdbd"></div>
<div class="a" style="left:395px;top:332px;width:1px;height:14px;background:#bdbdbd"></div>
<div class="a" style="left:395px;top:347px;width:1px;height:14px;background:#bdbdbd"></div>
<div class="a" style="left:395px;top:362px;width:1px;height:14px;background:#bdbdbd"></div>
<div class="a" style="left:395px;top:377px;width:1px;height:14px;background:#bdbdbd"></div>
<div class="a" style="left:395px;top:392px;width:1px;height:14px;background:#bdbdbd"></div>
<div class="a" style="left:395px;top:407px;width:1px;height:14px;background:#bdbdbd"></div>
<div class="a" style="left:395px;top:422px;width:1px;height:14px;background:#bdbdbd"></div>
<div class="a" style="left:395px;top:437px;width:1px;height:14px;background:#bdbdbd"></div>
<div class="a" style="left:395px;top:452px;width:1px;height:14px;background:#bdbdbd"></div>
<div class="a" style="left:395px;top:467px;width:1px;height:14px;background:#bdbdbd"></div>
<div class="a" style="left:395px;top:482px;width:1px;height:14px;background:#bdbdbd"></div>
<div class="a" style="left:395px;top:497px;width:1px;height:14px;background:#bdbdbd"></div>
<div class="a" style="left:395px;top:512px;width:1px;height:14px;background:#bdbdbd"></div>
<div class="a" style="left:395px;top:527px;width:1px;height:14px;background:#bdbdbd"></div>
<div class="a" style="left:395px;top:542px;width:1px;height:13px;background:#bdbdbd"></div>
<div class="a" style="left:395px;top:556px;width:1px;height:13px;background:#bdbdbd"></div>
<div class="a" style="left:395px;top:570px;width:1px;height:13px;background:#bdbdbd"></div>
<div class="a" style="left:395px;top:584px;width:1px;height:13px;background:#bdbdbd"></div>
<div class="a" style="left:395px;top:598px;width:1px;height:13px;background:#bdbdbd"></div>
<div class="a" style="left:395px;top:612px;width:1px;height:13px;background:#bdbdbd"></div>
<div class="a" style="left:395px;top:626px;width:1px;height:13px;background:#bdbdbd"></div>
<div class="a" style="left:395px;top:640px;width:1px;height:13px;background:#bdbdbd"></div>
<div class="a" style="left:395px;top:654px;width:1px;height:13px;background:#bdbdbd"></div>
<div class="a" style="left:395px;top:668px;width:1px;height:13px;background:#bdbdbd"></div>
<div class="a" style="left:395px;top:682px;width:1px;height:13px;background:#bdbdbd"></div>
<div class="a" style="left:480px;top:210px;width:1px;height:14px;background:#bdbdbd"></div>
<div class="a" style="left:480px;top:225px;width:1px;height:14px;background:#bdbdbd"></div>
<div class="a" style="left:480px;top:240px;width:1px;height:46px;background:#bdbdbd"></div>
<div class="a" style="left:480px;top:287px;width:1px;height:14px;background:#bdbdbd"></div>
<div class="a" style="left:480px;top:302px;width:1px;height:14px;background:#bdbdbd"></div>
<div class="a" style="left:480px;top:317px;width:1px;height:14px;background:#bdbdbd"></div>
<div class="a" style="left:480px;top:332px;width:1px;height:14px;background:#bdbdbd"></div>
<div class="a" style="left:480px;top:347px;width:1px;height:14px;background:#bdbdbd"></div>
<div class="a" style="left:480px;top:362px;width:1px;height:14px;background:#bdbdbd"></div>
<div class="a" style="left:480px;top:377px;width:1px;height:14px;background:#bdbdbd"></div>
<div class="a" style="left:480px;top:392px;width:1px;height:14px;background:#bdbdbd"></div>
<div class="a" style="left:480px;top:407px;width:1px;height:14px;background:#bdbdbd"></div>
<div class="a" style="left:480px;top:422px;width:1px;height:14px;background:#bdbdbd"></div>
<div class="a" style="left:480px;top:437px;width:1px;height:14px;background:#bdbdbd"></div>
<div class="a" style="left:480px;top:452px;width:1px;height:14px;background:#bdbdbd"></div>
<div class="a" style="left:480px;top:467px;width:1px;height:14px;background:#bdbdbd"></div>
<div class="a" style="left:480px;top:482px;width:1px;height:14px;background:#bdbdbd"></div>
<div class="a" style="left:480px;top:497px;width:1px;height:14px;background:#bdbdbd"></div>
<div class="a" style="left:480px;top:512px;width:1px;height:14px;background:#bdbdbd"></div>
<div class="a" style="left:480px;top:527px;width:1px;height:14px;background:#bdbdbd"></div>
<div class="a" style="left:480px;top:542px;width:1px;height:13px;background:#bdbdbd"></div>
<div class="a" style="left:480px;top:556px;width:1px;height:13px;background:#bdbdbd"></div>
<div class="a" style="left:480px;top:570px;width:1px;height:13px;background:#bdbdbd"></div>
<div class="a" style="left:480px;top:584px;width:1px;height:13px;background:#bdbdbd"></div>
<div class="a" style="left:480px;top:598px;width:1px;height:13px;background:#bdbdbd"></div>
<div class="a" style="left:480px;top:612px;width:1px;height:13px;background:#bdbdbd"></div>
<div class="a" style="left:480px;top:626px;width:1px;height:13px;background:#bdbdbd"></div>
<div class="a" style="left:480px;top:640px;width:1px;height:13px;background:#bdbdbd"></div>
<div class="a" style="left:480px;top:654px;width:1px;height:13px;background:#bdbdbd"></div>
<div class="a" style="left:480px;top:668px;width:1px;height:13px;background:#bdbdbd"></div>
<div class="a" style="left:480px;top:682px;width:1px;height:13px;background:#bdbdbd"></div>
<div class="a" style="left:565px;top:210px;width:1px;height:14px;background:#bdbdbd"></div>
<div class="a" style="left:565px;top:240px;width:1px;height:46px;background:#bdbdbd"></div>
<div class="a" style="left:565px;top:287px;width:1px;height:14px;background:#bdbdbd"></div>
<div class="a" style="left:565px;top:302px;width:1px;height:14px;background:#bdbdbd"></div>
<div class="a" style="left:565px;top:317px;width:1px;height:14px;background:#bdbdbd"></div>
<div class="a" style="left:565px;top:332px;width:1px;height:14px;background:#bdbdbd"></div>
<div class="a" style="left:565px;top:347px;width:1px;height:14px;background:#bdbdbd"></div>
<div class="a" style="left:565px;top:362px;width:1px;height:14px;background:#bdbdbd"></div>
<div class="a" style="left:565px;top:377px;width:1px;height:14px;background:#bdbdbd"></div>
<div class="a" style="left:565px;top:392px;width:1px;height:14px;background:#bdbdbd"></div>
<div class="a" style="left:565px;top:407px;width:1px;height:14px;background:#bdbdbd"></div>
<div class="a" style="left:565px;top:422px;width:1px;height:14px;background:#bdbdbd"></div>
<div class="a" style="left:565px;top:437px;width:1px;height:14px;background:#bdbdbd"></div>
<div class="a" style="left:565px;top:452px;width:1px;height:14px;background:#bdbdbd"></div>
<div class="a" style="left:565px;top:467px;width:1px;height:14px;background:#bdbdbd"></div>
<div class="a" style="left:565px;top:482px;width:1px;height:14px;background:#bdbdbd"></div>
<div class="a" style="left:565px;top:497px;width:1px;height:14px;background:#bdbdbd"></div>
<div class="a" style="left:565px;top:512px;width:1px;height:14px;background:#bdbdbd"></div>
<div class="a" style="left:565px;top:527px;width:1px;height:14px;background:#bdbdbd"></div>
<div class="a" style="left:565px;top:542px;width:1px;height:13px;background:#bdbdbd"></div>
<div class="a" style="left:565px;top:556px;width:1px;height:13px;background:#bdbdbd"></div>
<div class="a" style="left:565px;top:570px;width:1px;height:13px;background:#bdbdbd"></div>
<div class="a" style="left:565px;top:584px;width:1px;height:13px;background:#bdbdbd"></div>
<div class="a" style="left:565px;top:598px;width:1px;height:13px;background:#bdbdbd"></div>
<div class="a" style="left:565px;top:612px;width:1px;height:13px;background:#bdbdbd"></div>
<div class="a" style="left:565px;top:626px;width:1px;height:13px;background:#bdbdbd"></div>
<div class="a" style="left:565px;top:640px;width:1px;height:13px;background:#bdbdbd"></div>
<div class="a" style="left:565px;top:654px;width:1px;height:13px;background:#bdbdbd"></div>
<div class="a" style="left:565px;top:668px;width:1px;height:13px;background:#bdbdbd"></div>
<div class="a" style="left:565px;top:682px;width:1px;height:13px;background:#bdbdbd"></div>
<div class="a" style="left:650px;top:210px;width:1px;height:14px;background:#bdbdbd"></div>
<div class="a" style="left:650px;top:225px;width:1px;height:14px;background:#bdbdbd"></div>
<div class="a" style="left:650px;top:240px;width:1px;height:46px;background:#bdbdbd"></div>
<div class="a" style="left:650px;top:287px;width:1px;height:14px;background:#bdbdbd"></div>
<div class="a" style="left:650px;top:302px;width:1px;height:14px;background:#bdbdbd"></div>
<div class="a" style="left:650px;top:317px;width:1px;height:14px;background:#bdbdbd"></div>
<div class="a" style="left:650px;top:332px;width:1px;height:14px;background:#bdbdbd"></div>
<div class="a" style="left:650px;top:347px;width:1px;height:14px;background:#bdbdbd"></div>
<div class="a" style="left:650px;top:362px;width:1px;height:14px;background:#bdbdbd"></div>
<div class="a" style="left:650px;top:377px;width:1px;height:14px;background:#bdbdbd"></div>
<div class="a" style="left:650px;top:392px;width:1px;height:14px;background:#bdbdbd"></div>
<div class="a" style="left:650px;top:407px;width:1px;height:14px;background:#bdbdbd"></div>
<div class="a" style="left:650px;top:422px;width:1px;height:14px;background:#bdbdbd"></div>
<div class="a" style="left:650px;top:437px;width:1px;height:14px;background:#bdbdbd"></div>
<div class="a" style="left:650px;top:452px;width:1px;height:14px;background:#bdbdbd"></div>
<div class="a" style="left:650px;top:467px;width:1px;height:14px;background:#bdbdbd"></div>
<div class="a" style="left:650px;top:482px;width:1px;height:14px;background:#bdbdbd"></div>
<div class="a" style="left:650px;top:497px;width:1px;height:14px;background:#bdbdbd"></div>
<div class="a" style="left:650px;top:512px;width:1px;height:14px;background:#bdbdbd"></div>
<div class="a" style="left:650px;top:527px;width:1px;height:14px;background:#bdbdbd"></div>
<div class="a" style="left:650px;top:542px;width:1px;height:13px;background:#bdbdbd"></div>
<div class="a" style="left:650px;top:556px;width:1px;height:13px;background:#bdbdbd"></div>
<div class="a" style="left:650px;top:570px;width:1px;height:13px;background:#bdbdbd"></div>
<div class="a" style="left:650px;top:584px;width:1px;height:13px;background:#bdbdbd"></div>
<div class="a" style="left:650px;top:598px;width:1px;height:13px;background:#bdbdbd"></div>
<div class="a" style="left:650px;top:612px;width:1px;height:13px;background:#bdbdbd"></div>
<div class="a" style="left:650px;top:626px;width:1px;height:13px;background:#bdbdbd"></div>
<div class="a" style="left:650px;top:640px;width:1px;height:13px;background:#bdbdbd"></div>
<div class="a" style="left:650px;top:654px;width:1px;height:13px;background:#bdbdbd"></div>
<div class="a" style="left:650px;top:668px;width:1px;height:13px;background:#bdbdbd"></div>
<div class="a" style="left:650px;top:682px;width:1px;height:13px;background:#bdbdbd"></div>
<div class="a" style="left:735px;top:210px;width:1px;height:14px;background:#bdbdbd"></div>
<div class="a" style="left:735px;top:240px;width:1px;height:46px;background:#bdbdbd"></div>
<div class="a" style="left:735px;top:287px;width:1px;height:14px;background:#bdbdbd"></div>
<div class="a" style="left:735px;top:302px;width:1px;height:14px;background:#bdbdbd"></div>
<div class="a" style="left:735px;top:317px;width:1px;height:14px;background:#bdbdbd"></div>
<div class="a" style="left:735px;top:332px;width:1px;height:14px;background:#bdbdbd"></div>
<div class="a" style="left:735px;top:347px;width:1px;height:14px;background:#bdbdbd"></div>
<div class="a" style="left:735px;top:362px;width:1px;height:14px;background:#bdbdbd"></div>
<div class="a" style="left:735px;top:377px;width:1px;height:14px;background:#bdbdbd"></div>
<div class="a" style="left:735px;top:392px;width:1px;height:14px;background:#bdbdbd"></div>
<div class="a" style="left:735px;top:407px;width:1px;height:14px;background:#bdbdbd"></div>
<div class="a" style="left:735px;top:422px;width:1px;height:14px;background:#bdbdbd"></div>
<div class="a" style="left:735px;top:437px;width:1px;height:14px;background:#bdbdbd"></div>
<div class="a" style="left:735px;top:452px;width:1px;height:14px;background:#bdbdbd"></div>
<div class="a" style="left:735px;top:467px;width:1px;height:14px;background:#bdbdbd"></div>
<div class="a" style="left:735px;top:482px;width:1px;height:14px;background:#bdbdbd"></div>
<div class="a" style="left:735px;top:497px;width:1px;height:14px;background:#bdbdbd"></div>
<div class="a" style="left:735px;top:512px;width:1px;height:14px;background:#bdbdbd"></div>
<div class="a" style="left:735px;top:527px;width:1px;height:14px;background:#bdbdbd"></div>
<div class="a" style="left:735px;top:542px;width:1px;height:13px;background:#bdbdbd"></div>
<div class="a" style="left:735px;top:556px;width:1px;height:13px;background:#bdbdbd"></div>
<div class="a" style="left:735px;top:570px;width:1px;height:13px;background:#bdbdbd"></div>
<div class="a" style="left:735px;top:584px;width:1px;height:13px;background:#bdbdbd"></div>
<div class="a" style="left:735px;top:598px;width:1px;height:13px;background:#bdbdbd"></div>
<div class="a" style="left:735px;top:612px;width:1px;height:13px;background:#bdbdbd"></div>
<div class="a" style="left:735px;top:626px;width:1px;height:13px;background:#bdbdbd"></div>
<div class="a" style="left:735px;top:640px;width:1px;height:13px;background:#bdbdbd"></div>
<div class="a" style="left:735px;top:654px;width:1px;height:13px;background:#bdbdbd"></div>
<div class="a" style="left:735px;top:668px;width:1px;height:13px;background:#bdbdbd"></div>
<div class="a" style="left:735px;top:682px;width:1px;height:13px;background:#bdbdbd"></div>
<div class="a" style="left:820px;top:210px;width:1px;height:14px;background:#bdbdbd"></div>
<div class="a" style="left:820px;top:225px;width:1px;height:14px;background:#bdbdbd"></div>
<div class="a" style="left:820px;top:240px;width:1px;height:46px;background:#bdbdbd"></div>
<div class="a" style="left:820px;top:287px;width:1px;height:14px;background:#bdbdbd"></div>
<div class="a" style="left:820px;top:302px;width:1px;height:14px;background:#bdbdbd"></div>
<div class="a" style="left:820px;top:317px;width:1px;height:14px;background:#bdbdbd"></div>
<div class="a" style="left:820px;top:332px;width:1px;height:14px;background:#bdbdbd"></div>
<div class="a" style="left:820px;top:347px;width:1px;height:14px;background:#bdbdbd"></div>
<div class="a" style="left:820px;top:362px;width:1px;height:14px;background:#bdbdbd"></div>
<div class="a" style="left:820px;top:377px;width:1px;height:14px;background:#bdbdbd"></div>
<div class="a" style="left:820px;top:392px;width:1px;height:14px;background:#bdbdbd"></div>
<div class="a" style="left:820px;top:407px;width:1px;height:14px;background:#bdbdbd"></div>
<div class="a" style="left:820px;top:422px;width:1px;height:14px;background:#bdbdbd"></div>
<div class="a" style="left:820px;top:437px;width:1px;height:14px;background:#bdbdbd"></div>
<div class="a" style="left:820px;top:452px;width:1px;height:14px;background:#bdbdbd"></div>
<div class="a" style="left:820px;top:467px;width:1px;height:14px;background:#bdbdbd"></div>
<div class="a" style="left:820px;top:482px;width:1px;height:14px;background:#bdbdbd"></div>
<div class="a" style="left:820px;top:497px;width:1px;height:14px;background:#bdbdbd"></div>
<div class="a" style="left:820px;top:512px;width:1px;height:14px;background:#bdbdbd"></div>
<div class="a" style="left:820px;top:527px;width:1px;height:14px;background:#bdbdbd"></div>
<div class="a" style="left:820px;top:542px;width:1px;height:13px;background:#bdbdbd"></div>
<div class="a" style="left:820px;top:556px;width:1px;height:13px;background:#bdbdbd"></div>
<div class="a" style="left:820px;top:570px;width:1px;height:13px;background:#bdbdbd"></div>
<div class="a" style="left:820px;top:584px;width:1px;height:13px;background:#bdbdbd"></div>
<div class="a" style="left:820px;top:598px;width:1px;height:13px;background:#bdbdbd"></div>
<div class="a" style="left:820px;top:612px;width:1px;height:13px;background:#bdbdbd"></div>
<div class="a" style="left:820px;top:626px;width:1px;height:13px;background:#bdbdbd"></div>
<div class="a" style="left:820px;top:640px;width:1px;height:13px;background:#bdbdbd"></div>
<div class="a" style="left:820px;top:654px;width:1px;height:13px;background:#bdbdbd"></div>
<div class="a" style="left:820px;top:668px;width:1px;height:13px;background:#bdbdbd"></div>
<div class="a" style="left:820px;top:682px;width:1px;height:13px;background:#bdbdbd"></div>
<div class="a" style="left:905px;top:210px;width:1px;height:14px;background:#bdbdbd"></div>
<div class="a" style="left:905px;top:240px;width:1px;height:46px;background:#bdbdbd"></div>
<div class="a" style="left:905px;top:287px;width:1px;height:14px;background:#bdbdbd"></div>
<div class="a" style="left:905px;top:302px;width:1px;height:14px;background:#bdbdbd"></div>
<div class="a" style="left:905px;top:317px;width:1px;height:14px;background:#bdbdbd"></div>
<div class="a" style="left:905px;top:332px;width:1px;height:14px;background:#bdbdbd"></div>
<div class="a" style="left:905px;top:347px;width:1px;height:14px;background:#bdbdbd"></div>
<div class="a" style="left:905px;top:362px;width:1px;height:14px;background:#bdbdbd"></div>
<div class="a" style="left:905px;top:377px;width:1px;height:14px;background:#bdbdbd"></div>
<div class="a" style="left:905px;top:392px;width:1px;height:14px;background:#bdbdbd"></div>
<div class="a" style="left:905px;top:407px;width:1px;height:14px;background:#bdbdbd"></div>
<div class="a" style="left:905px;top:422px;width:1px;height:14px;background:#bdbdbd"></div>
<div class="a" style="left:905px;top:437px;width:1px;height:14px;background:#bdbdbd"></div>
<div class="a" style="left:905px;top:452px;width:1px;height:14px;background:#bdbdbd"></div>
<div class="a" style="left:905px;top:467px;width:1px;height:14px;background:#bdbdbd"></div>
<div class="a" style="left:905px;top:482px;width:1px;height:14px;background:#bdbdbd"></div>
<div class="a" style="left:905px;top:497px;width:1px;height:14px;background:#bdbdbd"></div>
<div class="a" style="left:905px;top:512px;width:1px;height:14px;background:#bdbdbd"></div>
<div class="a" style="left:905px;top:527px;width:1px;height:14px;background:#bdbdbd"></div>
<div class="a" style="left:905px;top:542px;width:1px;height:13px;background:#bdbdbd"></div>
<div class="a" style="left:905px;top:556px;width:1px;height:13px;background:#bdbdbd"></div>
<div class="a" style="left:905px;top:570px;width:1px;height:13px;background:#bdbdbd"></div>
<div class="a" style="left:905px;top:584px;width:1px;height:13px;background:#bdbdbd"></div>
<div class="a" style="left:905px;top:598px;width:1px;height:13px;background:#bdbdbd"></div>
<div class="a" style="left:905px;top:612px;width:1px;height:13px;background:#bdbdbd"></div>
<div class="a" style="left:905px;top:626px;width:1px;height:13px;background:#bdbdbd"></div>
<div class="a" style="left:905px;top:640px;width:1px;height:13px;background:#bdbdbd"></div>
<div class="a" style="left:905px;top:654px;width:1px;height:13px;background:#bdbdbd"></div>
<div class="a" style="left:905px;top:668px;width:1px;height:13px;background:#bdbdbd"></div>
<div class="a" style="left:905px;top:682px;width:1px;height:13px;background:#bdbdbd"></div>
<div class="a" style="left:990px;top:210px;width:1px;height:14px;background:#bdbdbd"></div>
<div class="a" style="left:990px;top:225px;width:1px;height:14px;background:#bdbdbd"></div>
<div class="a" style="left:990px;top:240px;width:1px;height:46px;background:#bdbdbd"></div>
<div class="a" style="left:990px;top:287px;width:1px;height:14px;background:#bdbdbd"></div>
<div class="a" style="left:990px;top:302px;width:1px;height:14px;background:#bdbdbd"></div>
<div class="a" style="left:990px;top:317px;width:1px;height:14px;background:#bdbdbd"></div>
<div class="a" style="left:990px;top:332px;width:1px;height:14px;background:#bdbdbd"></div>
<div class="a" style="left:990px;top:347px;width:1px;height:14px;background:#bdbdbd"></div>
<div class="a" style="left:990px;top:362px;width:1px;height:14px;background:#bdbdbd"></div>
<div class="a" style="left:990px;top:377px;width:1px;height:14px;background:#bdbdbd"></div>
<div class="a" style="left:990px;top:392px;width:1px;height:14px;background:#bdbdbd"></div>
<div class="a" style="left:990px;top:407px;width:1px;height:14px;background:#bdbdbd"></div>
<div class="a" style="left:990px;top:422px;width:1px;height:14px;background:#bdbdbd"></div>
<div class="a" style="left:990px;top:437px;width:1px;height:14px;background:#bdbdbd"></div>
<div class="a" style="left:990px;top:452px;width:1px;height:14px;background:#bdbdbd"></div>
<div class="a" style="left:990px;top:467px;width:1px;height:14px;background:#bdbdbd"></div>
<div class="a" style="left:990px;top:482px;width:1px;height:14px;background:#bdbdbd"></div>
<div class="a" style="left:990px;top:497px;width:1px;height:14px;background:#bdbdbd"></div>
<div class="a" style="left:990px;top:512px;width:1px;height:14px;background:#bdbdbd"></div>
<div class="a" style="left:990px;top:527px;width:1px;height:14px;background:#bdbdbd"></div>
<div class="a" style="left:990px;top:542px;width:1px;height:13px;background:#bdbdbd"></div>
<div class="a" style="left:990px;top:556px;width:1px;height:13px;background:#bdbdbd"></div>
<div class="a" style="left:990px;top:570px;width:1px;height:13px;background:#bdbdbd"></div>
<div class="a" style="left:990px;top:584px;width:1px;height:13px;background:#bdbdbd"></div>
<div class="a" style="left:990px;top:598px;width:1px;height:13px;background:#bdbdbd"></div>
<div class="a" style="left:990px;top:612px;width:1px;height:13px;background:#bdbdbd"></div>
<div class="a" style="left:990px;top:626px;width:1px;height:13px;background:#bdbdbd"></div>
<div class="a" style="left:990px;top:640px;width:1px;height:13px;background:#bdbdbd"></div>
<div class="a" style="left:990px;top:654px;width:1px;height:13px;background:#bdbdbd"></div>
<div class="a" style="left:990px;top:668px;width:1px;height:13px;background:#bdbdbd"></div>
<div class="a" style="left:990px;top:682px;width:1px;height:13px;background:#bdbdbd"></div>
<div class="a" style="left:1075px;top:210px;width:1px;height:14px;background:#bdbdbd"></div>
<div class="a" style="left:1075px;top:240px;width:1px;height:46px;background:#bdbdbd"></div>
<div class="a" style="left:1075px;top:287px;width:1px;height:14px;background:#bdbdbd"></div>
<div class="a" style="left:1075px;top:302px;width:1px;height:14px;background:#bdbdbd"></div>
<div class="a" style="left:1075px;top:317px;width:1px;height:14px;background:#bdbdbd"></div>
<div class="a" style="left:1075px;top:332px;width:1px;height:14px;background:#bdbdbd"></div>
<div class="a" style="left:1075px;top:347px;width:1px;height:14px;background:#bdbdbd"></div>
<div class="a" style="left:1075px;top:362px;width:1px;height:14px;background:#bdbdbd"></div>
<div class="a" style="left:1075px;top:377px;width:1px;height:14px;background:#bdbdbd"></div>
<div class="a" style="left:1075px;top:392px;width:1px;height:14px;background:#bdbdbd"></div>
<div class="a" style="left:1075px;top:407px;width:1px;height:14px;background:#bdbdbd"></div>
<div class="a" style="left:1075px;top:422px;width:1px;height:14px;background:#bdbdbd"></div>
<div class="a" style="left:1075px;top:437px;width:1px;height:14px;background:#bdbdbd"></div>
<div class="a" style="left:1075px;top:452px;width:1px;height:14px;background:#bdbdbd"></div>
<div class="a" style="left:1075px;top:467px;width:1px;height:14px;background:#bdbdbd"></div>
<div class="a" style="left:1075px;top:482px;width:1px;height:14px;background:#bdbdbd"></div>
<div class="a" style="left:1075px;top:497px;width:1px;height:14px;background:#bdbdbd"></div>
<div class="a" style="left:1075px;top:512px;width:1px;height:14px;background:#bdbdbd"></div>
<div class="a" style="left:1075px;top:527px;width:1px;height:14px;background:#bdbdbd"></div>
<div class="a" style="left:1075px;top:542px;width:1px;height:13px;background:#bdbdbd"></div>
<div class="a" style="left:1075px;top:556px;width:1px;height:13px;background:#bdbdbd"></div>
<div class="a" style="left:1075px;top:570px;width:1px;height:13px;background:#bdbdbd"></div>
<div class="a" style="left:1075px;top:584px;width:1px;height:13px;background:#bdbdbd"></div>
<div class="a" style="left:1075px;top:598px;width:1px;height:13px;background:#bdbdbd"></div>
<div class="a" style="left:1075px;top:612px;width:1px;height:13px;background:#bdbdbd"></div>
<div class="a" style="left:1075px;top:626px;width:1px;height:13px;background:#bdbdbd"></div>
<div class="a" style="left:1075px;top:640px;width:1px;height:13px;background:#bdbdbd"></div>
<div class="a" style="left:1075px;top:654px;width:1px;height:13px;background:#bdbdbd"></div>
<div class="a" style="left:1075px;top:668px;width:1px;height:13px;background:#bdbdbd"></div>
<div class="a" style="left:1075px;top:682px;width:1px;height:13px;background:#bdbdbd"></div>
<div class="a" style="left:1160px;top:210px;width:1px;height:14px;background:#bdbdbd"></div>
<div class="a" style="left:1160px;top:225px;width:1px;height:14px;background:#bdbdbd"></div>
<div class="a" style="left:1160px;top:240px;width:1px;height:46px;background:#bdbdbd"></div>
<div class="a" style="left:1160px;top:287px;width:1px;height:14px;background:#bdbdbd"></div>
<div class="a" style="left:1160px;top:302px;width:1px;height:14px;background:#bdbdbd"></div>
<div class="a" style="left:1160px;top:317px;width:1px;height:14px;background:#bdbdbd"></div>
<div class="a" style="left:1160px;top:332px;width:1px;height:14px;background:#bdbdbd"></div>
<div class="a" style="left:1160px;top:347px;width:1px;height:14px;background:#bdbdbd"></div>
<div class="a" style="left:1160px;top:362px;width:1px;height:14px;background:#bdbdbd"></div>
<div class="a" style="left:1160px;top:377px;width:1px;height:14px;background:#bdbdbd"></div>
<div class="a" style="left:1160px;top:392px;width:1px;height:14px;background:#bdbdbd"></div>
<div class="a" style="left:1160px;top:407px;width:1px;height:14px;background:#bdbdbd"></div>
<div class="a" style="left:1160px;top:422px;width:1px;height:14px;background:#bdbdbd"></div>
<div class="a" style="left:1160px;top:437px;width:1px;height:14px;background:#bdbdbd"></div>
<div class="a" style="left:1160px;top:452px;width:1px;height:14px;background:#bdbdbd"></div>
<div class="a" style="left:1160px;top:467px;width:1px;height:14px;background:#bdbdbd"></div>
<div class="a" style="left:1160px;top:482px;width:1px;height:14px;background:#bdbdbd"></div>
<div class="a" style="left:1160px;top:497px;width:1px;height:14px;background:#bdbdbd"></div>
<div class="a" style="left:1160px;top:512px;width:1px;height:14px;background:#bdbdbd"></div>
<div class="a" style="left:1160px;top:527px;width:1px;height:14px;background:#bdbdbd"></div>
<div class="a" style="left:1160px;top:542px;width:1px;height:13px;background:#bdbdbd"></div>
<div class="a" style="left:1160px;top:556px;width:1px;height:13px;background:#bdbdbd"></div>
<div class="a" style="left:1160px;top:570px;width:1px;height:13px;background:#bdbdbd"></div>
<div class="a" style="left:1160px;top:584px;width:1px;height:13px;background:#bdbdbd"></div>
<div class="a" style="left:1160px;top:598px;width:1px;height:13px;background:#bdbdbd"></div>
<div class="a" style="left:1160px;top:612px;width:1px;height:13px;background:#bdbdbd"></div>
<div class="a" style="left:1160px;top:626px;width:1px;height:13px;background:#bdbdbd"></div>
<div class="a" style="left:1160px;top:640px;width:1px;height:13px;background:#bdbdbd"></div>
<div class="a" style="left:1160px;top:654px;width:1px;height:13px;background:#bdbdbd"></div>
<div class="a" style="left:1160px;top:668px;width:1px;height:13px;background:#bdbdbd"></div>
<div class="a" style="left:1160px;top:682px;width:1px;height:13px;background:#bdbdbd"></div>
<div class="a" style="left:1245px;top:210px;width:1px;height:14px;background:#bdbdbd"></div>
<div class="a" style="left:1245px;top:225px;width:1px;height:14px;background:#bdbdbd"></div>
<div class="a" style="left:1245px;top:240px;width:1px;height:46px;background:#bdbdbd"></div>
<div class="a" style="left:1245px;top:287px;width:1px;height:14px;background:#bdbdbd"></div>
<div class="a" style="left:1245px;top:302px;width:1px;height:14px;background:#bdbdbd"></div>
<div class="a" style="left:1245px;top:317px;width:1px;height:14px;background:#bdbdbd"></div>
<div class="a" style="left:1245px;top:332px;width:1px;height:14px;background:#bdbdbd"></div>
<div class="a" style="left:1245px;top:347px;width:1px;height:14px;background:#bdbdbd"></div>
<div class="a" style="left:1245px;top:362px;width:1px;height:14px;background:#bdbdbd"></div>
<div class="a" style="left:1245px;top:377px;width:1px;height:14px;background:#bdbdbd"></div>
<div class="a" style="left:1245px;top:392px;width:1px;height:14px;background:#bdbdbd"></div>
<div class="a" style="left:1245px;top:407px;width:1px;height:14px;background:#bdbdbd"></div>
<div class="a" style="left:1245px;top:422px;width:1px;height:14px;background:#bdbdbd"></div>
<div class="a" style="left:1245px;top:437px;width:1px;height:14px;background:#bdbdbd"></div>
<div class="a" style="left:1245px;top:452px;width:1px;height:14px;background:#bdbdbd"></div>
<div class="a" style="left:1245px;top:467px;width:1px;height:14px;background:#bdbdbd"></div>
<div class="a" style="left:1245px;top:482px;width:1px;height:14px;background:#bdbdbd"></div>
<div class="a" style="left:1245px;top:497px;width:1px;height:14px;background:#bdbdbd"></div>
<div class="a" style="left:1245px;top:512px;width:1px;height:14px;background:#bdbdbd"></div>
<div class="a" style="left:1245px;top:527px;width:1px;height:14px;background:#bdbdbd"></div>
<div class="a" style="left:1245px;top:542px;width:1px;height:13px;background:#bdbdbd"></div>
<div class="a" style="left:1245px;top:556px;width:1px;height:13px;background:#bdbdbd"></div>
<div class="a" style="left:1245px;top:570px;width:1px;height:13px;background:#bdbdbd"></div>
<div class="a" style="left:1245px;top:584px;width:1px;height:13px;background:#bdbdbd"></div>
<div class="a" style="left:1245px;top:598px;width:1px;height:13px;background:#bdbdbd"></div>
<div class="a" style="left:1245px;top:612px;width:1px;height:13px;background:#bdbdbd"></div>
<div class="a" style="left:1245px;top:626px;width:1px;height:13px;background:#bdbdbd"></div>
<div class="a" style="left:1245px;top:640px;width:1px;height:13px;background:#bdbdbd"></div>
<div class="a" style="left:1245px;top:654px;width:1px;height:13px;background:#bdbdbd"></div>
<div class="a" style="left:1245px;top:668px;width:1px;height:13px;background:#bdbdbd"></div>
<div class="a" style="left:1245px;top:682px;width:1px;height:13px;background:#bdbdbd"></div>
<div class="a" style="left:35px;top:163px;width:1226px;height:1px;background:#000"></div>
<div class="a" style="left:35px;top:178px;width:1226px;height:3px;background:#000"></div>
<div class="a" style="left:35px;top:163px;width:1px;height:17px;background:#000"></div>
<div class="a" style="left:140px;top:224px;width:1021px;height:1px;background:#000"></div>
<div class="a" style="left:34px;top:239px;width:1127px;height:1px;background:#000"></div>
<div class="a" style="left:34px;top:286px;width:1127px;height:1px;background:#000"></div>
<div class="a" style="left:34px;top:301px;width:1127px;height:1px;background:#000"></div>
<div class="a" style="left:34px;top:316px;width:1127px;height:1px;background:#000"></div>
<div class="a" style="left:34px;top:331px;width:1127px;height:1px;background:#000"></div>
<div class="a" style="left:34px;top:346px;width:1127px;height:1px;background:#000"></div>
<div class="a" style="left:34px;top:361px;width:1127px;height:1px;background:#000"></div>
<div class="a" style="left:34px;top:376px;width:1127px;height:1px;background:#000"></div>
<div class="a" style="left:34px;top:391px;width:1127px;height:1px;background:#000"></div>
<div class="a" style="left:34px;top:406px;width:1127px;height:1px;background:#000"></div>
<div class="a" style="left:34px;top:421px;width:1127px;height:1px;background:#000"></div>
<div class="a" style="left:34px;top:436px;width:1127px;height:1px;background:#000"></div>
<div class="a" style="left:34px;top:451px;width:1127px;height:1px;background:#000"></div>
<div class="a" style="left:34px;top:466px;width:1127px;height:1px;background:#000"></div>
<div class="a" style="left:34px;top:481px;width:1127px;height:1px;background:#000"></div>
<div class="a" style="left:34px;top:496px;width:1127px;height:1px;background:#000"></div>
<div class="a" style="left:34px;top:511px;width:1127px;height:1px;background:#000"></div>
<div class="a" style="left:34px;top:526px;width:1127px;height:1px;background:#000"></div>
<div class="a" style="left:34px;top:541px;width:1127px;height:1px;background:#000"></div>
<div class="a" style="left:140px;top:224px;width:1px;height:318px;background:#000"></div>
<div class="a" style="left:310px;top:224px;width:1px;height:318px;background:#000"></div>
<div class="a" style="left:480px;top:224px;width:1px;height:318px;background:#000"></div>
<div class="a" style="left:650px;top:224px;width:1px;height:318px;background:#000"></div>
<div class="a" style="left:820px;top:224px;width:1px;height:318px;background:#000"></div>
<div class="a" style="left:990px;top:224px;width:1px;height:318px;background:#000"></div>
<div class="a" style="left:1160px;top:224px;width:1px;height:318px;background:#000"></div>
<div class="a" style="left:225px;top:239px;width:1px;height:303px;background:#000"></div>
<div class="a" style="left:395px;top:239px;width:1px;height:303px;background:#000"></div>
<div class="a" style="left:565px;top:239px;width:1px;height:303px;background:#000"></div>
<div class="a" style="left:735px;top:239px;width:1px;height:303px;background:#000"></div>
<div class="a" style="left:905px;top:239px;width:1px;height:303px;background:#000"></div>
<div class="a" style="left:1075px;top:239px;width:1px;height:303px;background:#000"></div>
<div class="a" style="left:34px;top:239px;width:1px;height:303px;background:#000"></div>
<div class="a" style="left:87px;top:286px;width:1px;height:256px;background:#000"></div>
<div class="t ser " style="left:35px;width:1295px;text-align:center;top:165px;font-size:14px;font-weight:bold;letter-spacing:0.07px">Federal Student Loan Portfolio by Borrower Age</div>
<div class="t ser " style="left:35px;width:1295px;text-align:center;top:181px;font-size:12px;font-style:italic">Includes outstanding principal and interest balances</div>
<div class="t ser " style="left:35px;width:1295px;text-align:center;top:196px;font-size:12px">Data Source: Enterprise Data Warehouse</div>
<div class="t ser " style="left:140px;width:170px;text-align:center;top:227px;font-size:12px;font-weight:bold">24 and Younger</div>
<div class="t ser " style="left:310px;width:170px;text-align:center;top:227px;font-size:12px;font-weight:bold">25 to 34</div>
<div class="t ser " style="left:480px;width:170px;text-align:center;top:227px;font-size:12px;font-weight:bold">35 to 49</div>
<div class="t ser " style="left:650px;width:170px;text-align:center;top:227px;font-size:12px;font-weight:bold">50 to 61</div>
<div class="t ser " style="left:820px;width:170px;text-align:center;top:227px;font-size:12px;font-weight:bold">62 and Older</div>
<div class="t ser " style="left:990px;width:170px;text-align:center;top:227px;font-size:12px;font-weight:bold">Not Reported</div>
<div class="t ser " style="left:35px;width:105px;text-align:center;top:258px;font-size:12px;font-weight:bold;letter-spacing:0.2px">Federal Fiscal Year</div>
<div class="t ser " style="left:140px;width:85px;text-align:center;top:243px;font-size:12px;font-weight:bold">Dollars</div>
<div class="t ser " style="left:142px;width:83px;text-align:left;top:258px;font-size:12px;font-weight:bold;letter-spacing:-0.3px">Outstanding</div>
<div class="t ser " style="left:140px;width:78px;text-align:right;top:272px;font-size:12px;font-weight:bold">(in billions)</div>
<div class="t ser " style="left:228px;width:82px;text-align:left;top:250px;font-size:12px;font-weight:bold">Borrowers</div>
<div class="t ser " style="left:225px;width:84px;text-align:right;top:250px;font-size:12px;font-weight:bold">(in</div>
<div class="t ser " style="left:225px;width:85px;text-align:center;top:265px;font-size:12px;font-weight:bold">millions)</div>
<div class="t ser " style="left:310px;width:85px;text-align:center;top:243px;font-size:12px;font-weight:bold">Dollars</div>
<div class="t ser " style="left:312px;width:83px;text-align:left;top:258px;font-size:12px;font-weight:bold;letter-spacing:-0.3px">Outstanding</div>
<div class="t ser " style="left:310px;width:78px;text-align:right;top:272px;font-size:12px;font-weight:bold">(in billions)</div>
<div class="t ser " style="left:398px;width:82px;text-align:left;top:250px;font-size:12px;font-weight:bold">Borrowers</div>
<div class="t ser " style="left:395px;width:84px;text-align:right;top:250px;font-size:12px;font-weight:bold">(in</div>
<div class="t ser " style="left:395px;width:85px;text-align:center;top:265px;font-size:12px;font-weight:bold">millions)</div>
<div class="t ser " style="left:480px;width:85px;text-align:center;top:243px;font-size:12px;font-weight:bold">Dollars</div>
<div class="t ser " style="left:482px;width:83px;text-align:left;top:258px;font-size:12px;font-weight:bold;letter-spacing:-0.3px">Outstanding</div>
<div class="t ser " style="left:480px;width:78px;text-align:right;top:272px;font-size:12px;font-weight:bold">(in billions)</div>
<div class="t ser " style="left:568px;width:82px;text-align:left;top:250px;font-size:12px;font-weight:bold">Borrowers</div>
<div class="t ser " style="left:565px;width:84px;text-align:right;top:250px;font-size:12px;font-weight:bold">(in</div>
<div class="t ser " style="left:565px;width:85px;text-align:center;top:265px;font-size:12px;font-weight:bold">millions)</div>
<div class="t ser " style="left:650px;width:85px;text-align:center;top:243px;font-size:12px;font-weight:bold">Dollars</div>
<div class="t ser " style="left:652px;width:83px;text-align:left;top:258px;font-size:12px;font-weight:bold;letter-spacing:-0.3px">Outstanding</div>
<div class="t ser " style="left:650px;width:78px;text-align:right;top:272px;font-size:12px;font-weight:bold">(in billions)</div>
<div class="t ser " style="left:738px;width:82px;text-align:left;top:250px;font-size:12px;font-weight:bold">Borrowers</div>
<div class="t ser " style="left:735px;width:84px;text-align:right;top:250px;font-size:12px;font-weight:bold">(in</div>
<div class="t ser " style="left:735px;width:85px;text-align:center;top:265px;font-size:12px;font-weight:bold">millions)</div>
<div class="t ser " style="left:820px;width:85px;text-align:center;top:243px;font-size:12px;font-weight:bold">Dollars</div>
<div class="t ser " style="left:822px;width:83px;text-align:left;top:258px;font-size:12px;font-weight:bold;letter-spacing:-0.3px">Outstanding</div>
<div class="t ser " style="left:820px;width:78px;text-align:right;top:272px;font-size:12px;font-weight:bold">(in billions)</div>
<div class="t ser " style="left:908px;width:82px;text-align:left;top:250px;font-size:12px;font-weight:bold">Borrowers</div>
<div class="t ser " style="left:905px;width:84px;text-align:right;top:250px;font-size:12px;font-weight:bold">(in</div>
<div class="t ser " style="left:905px;width:85px;text-align:center;top:265px;font-size:12px;font-weight:bold">millions)</div>
<div class="t ser " style="left:990px;width:85px;text-align:center;top:243px;font-size:12px;font-weight:bold">Dollars</div>
<div class="t ser " style="left:992px;width:83px;text-align:left;top:258px;font-size:12px;font-weight:bold;letter-spacing:-0.3px">Outstanding</div>
<div class="t ser " style="left:990px;width:78px;text-align:right;top:272px;font-size:12px;font-weight:bold">(in billions)</div>
<div class="t ser " style="left:1078px;width:82px;text-align:left;top:250px;font-size:12px;font-weight:bold">Borrowers</div>
<div class="t ser " style="left:1075px;width:84px;text-align:right;top:250px;font-size:12px;font-weight:bold">(in</div>
<div class="t ser " style="left:1075px;width:85px;text-align:center;top:265px;font-size:12px;font-weight:bold">millions)</div>
<div class="t ser " style="left:34px;width:52px;text-align:center;top:289px;font-size:12px;font-weight:bold;">2017</div>
<div class="t ser " style="left:87px;width:52px;text-align:center;top:289px;font-size:12px;font-weight:bold;">Q2</div>
<svg class="a" style="left:106px;top:299px" width="16" height="2"><path d="M0 1.5L1.5 0.5L3 1.5L4.5 0.5L6 1.5L7.5 0.5L9 1.5L10.5 0.5L12 1.5L13.5 0.5L15 1.5" stroke="#c01818" stroke-width="1" fill="none"/></svg>
<div class="t ser " style="left:140px;width:84px;text-align:center;top:289px;font-size:12px;">$134.3</div>
<div class="t ser " style="left:225px;width:84px;text-align:center;top:289px;font-size:12px;">8.6</div>
<div class="t ser " style="left:310px;width:84px;text-align:center;top:289px;font-size:12px;">$477.4</div>
<div class="t ser " style="left:395px;width:84px;text-align:center;top:289px;font-size:12px;">15.3</div>
<div class="t ser " style="left:480px;width:84px;text-align:center;top:289px;font-size:12px;">$484.7</div>
<div class="t ser " style="left:565px;width:84px;text-align:center;top:289px;font-size:12px;">13.5</div>
<div class="t ser " style="left:650px;width:84px;text-align:center;top:289px;font-size:12px;">$191.9</div>
<div class="t ser " style="left:735px;width:84px;text-align:center;top:289px;font-size:12px;">5.6</div>
<div class="t ser " style="left:820px;width:84px;text-align:center;top:289px;font-size:12px;">$51.9</div>
<div class="t ser " style="left:905px;width:84px;text-align:center;top:289px;font-size:12px;">1.7</div>
<div class="t ser " style="left:990px;width:84px;text-align:center;top:289px;font-size:12px;">$0.3</div>
<div class="t ser " style="left:1075px;width:84px;text-align:center;top:289px;font-size:12px;">0.1</div>
<div class="t ser " style="left:34px;width:52px;text-align:center;top:304px;font-size:12px;font-weight:bold;">2017</div>
<div class="t ser " style="left:87px;width:52px;text-align:center;top:304px;font-size:12px;font-weight:bold;">Q3</div>
<svg class="a" style="left:106px;top:314px" width="16" height="2"><path d="M0 1.5L1.5 0.5L3 1.5L4.5 0.5L6 1.5L7.5 0.5L9 1.5L10.5 0.5L12 1.5L13.5 0.5L15 1.5" stroke="#c01818" stroke-width="1" fill="none"/></svg>
<div class="t ser " style="left:140px;width:84px;text-align:center;top:304px;font-size:12px;">$126.5</div>
<div class="t ser " style="left:225px;width:84px;text-align:center;top:304px;font-size:12px;">8.2</div>
<div class="t ser " style="left:310px;width:84px;text-align:center;top:304px;font-size:12px;">$477.8</div>
<div class="t ser " style="left:395px;width:84px;text-align:center;top:304px;font-size:12px;">15.2</div>
<div class="t ser " style="left:480px;width:84px;text-align:center;top:304px;font-size:12px;">$490.2</div>
<div class="t ser " style="left:565px;width:84px;text-align:center;top:304px;font-size:12px;">13.5</div>
<div class="t ser " style="left:650px;width:84px;text-align:center;top:304px;font-size:12px;">$194.1</div>
<div class="t ser " style="left:735px;width:84px;text-align:center;top:304px;font-size:12px;">5.6</div>
<div class="t ser " style="left:820px;width:84px;text-align:center;top:304px;font-size:12px;">$53.2</div>
<div class="t ser " style="left:905px;width:84px;text-align:center;top:304px;font-size:12px;">1.7</div>
<div class="t ser " style="left:990px;width:84px;text-align:center;top:304px;font-size:12px;">$0.2</div>
<div class="t ser " style="left:1075px;width:84px;text-align:center;top:304px;font-size:12px;">0.1</div>
<div class="t ser " style="left:34px;width:52px;text-align:center;top:319px;font-size:12px;font-weight:bold;">2017</div>
<div class="t ser " style="left:87px;width:52px;text-align:center;top:319px;font-size:12px;font-weight:bold;">Q4</div>
<svg class="a" style="left:106px;top:329px" width="16" height="2"><path d="M0 1.5L1.5 0.5L3 1.5L4.5 0.5L6 1.5L7.5 0.5L9 1.5L10.5 0.5L12 1.5L13.5 0.5L15 1.5" stroke="#c01818" stroke-width="1" fill="none"/></svg>
<div class="t ser " style="left:140px;width:84px;text-align:center;top:319px;font-size:12px;">$130.3</div>
<div class="t ser " style="left:225px;width:84px;text-align:center;top:319px;font-size:12px;">8.7</div>
<div class="t ser " style="left:310px;width:84px;text-align:center;top:319px;font-size:12px;">$484.0</div>
<div class="t ser " style="left:395px;width:84px;text-align:center;top:319px;font-size:12px;">15.3</div>
<div class="t ser " style="left:480px;width:84px;text-align:center;top:319px;font-size:12px;">$502.2</div>
<div class="t ser " style="left:565px;width:84px;text-align:center;top:319px;font-size:12px;">13.7</div>
<div class="t ser " style="left:650px;width:84px;text-align:center;top:319px;font-size:12px;">$199.8</div>
<div class="t ser " style="left:735px;width:84px;text-align:center;top:319px;font-size:12px;">5.7</div>
<div class="t ser " style="left:820px;width:84px;text-align:center;top:319px;font-size:12px;">$55.4</div>
<div class="t ser " style="left:905px;width:84px;text-align:center;top:319px;font-size:12px;">1.7</div>
<div class="t ser " style="left:990px;width:84px;text-align:center;top:319px;font-size:12px;">$0.3</div>
<div class="t ser " style="left:1075px;width:84px;text-align:center;top:319px;font-size:12px;">0.1</div>
<div class="t ser " style="left:34px;width:52px;text-align:center;top:334px;font-size:12px;font-weight:bold;">2018</div>
<div class="t ser " style="left:87px;width:52px;text-align:center;top:334px;font-size:12px;font-weight:bold;">Q1</div>
<svg class="a" style="left:106px;top:344px" width="16" height="2"><path d="M0 1.5L1.5 0.5L3 1.5L4.5 0.5L6 1.5L7.5 0.5L9 1.5L10.5 0.5L12 1.5L13.5 0.5L15 1.5" stroke="#c01818" stroke-width="1" fill="none"/></svg>
<div class="t ser " style="left:140px;width:84px;text-align:center;top:334px;font-size:12px;">$124.4</div>
<div class="t ser " style="left:225px;width:84px;text-align:center;top:334px;font-size:12px;">8.6</div>
<div class="t ser " style="left:310px;width:84px;text-align:center;top:334px;font-size:12px;">$483.8</div>
<div class="t ser " style="left:395px;width:84px;text-align:center;top:334px;font-size:12px;">15.3</div>
<div class="t ser " style="left:480px;width:84px;text-align:center;top:334px;font-size:12px;">$511.3</div>
<div class="t ser " style="left:565px;width:84px;text-align:center;top:334px;font-size:12px;">13.8</div>
<div class="t ser " style="left:650px;width:84px;text-align:center;top:334px;font-size:12px;">$204.0</div>
<div class="t ser " style="left:735px;width:84px;text-align:center;top:334px;font-size:12px;">5.7</div>
<div class="t ser " style="left:820px;width:84px;text-align:center;top:334px;font-size:12px;">$57.9</div>
<div class="t ser " style="left:905px;width:84px;text-align:center;top:334px;font-size:12px;">1.8</div>
<div class="t ser " style="left:990px;width:84px;text-align:center;top:334px;font-size:12px;">$0.2</div>
<div class="t ser " style="left:1075px;width:84px;text-align:center;top:334px;font-size:12px;">0.1</div>
<div class="t ser " style="left:34px;width:52px;text-align:center;top:349px;font-size:12px;font-weight:bold;">2018</div>
<div class="t ser " style="left:87px;width:52px;text-align:center;top:349px;font-size:12px;font-weight:bold;">Q2</div>
<svg class="a" style="left:106px;top:359px" width="16" height="2"><path d="M0 1.5L1.5 0.5L3 1.5L4.5 0.5L6 1.5L7.5 0.5L9 1.5L10.5 0.5L12 1.5L13.5 0.5L15 1.5" stroke="#c01818" stroke-width="1" fill="none"/></svg>
<div class="t ser " style="left:140px;width:84px;text-align:center;top:349px;font-size:12px;">$129.1</div>
<div class="t ser " style="left:225px;width:84px;text-align:center;top:349px;font-size:12px;">8.4</div>
<div class="t ser " style="left:310px;width:84px;text-align:center;top:349px;font-size:12px;">$488.6</div>
<div class="t ser " style="left:395px;width:84px;text-align:center;top:349px;font-size:12px;">15.2</div>
<div class="t ser " style="left:480px;width:84px;text-align:center;top:349px;font-size:12px;">$522.4</div>
<div class="t ser " style="left:565px;width:84px;text-align:center;top:349px;font-size:12px;">13.8</div>
<div class="t ser " style="left:650px;width:84px;text-align:center;top:349px;font-size:12px;">$210.3</div>
<div class="t ser " style="left:735px;width:84px;text-align:center;top:349px;font-size:12px;">5.8</div>
<div class="t ser " style="left:820px;width:84px;text-align:center;top:349px;font-size:12px;">$60.5</div>
<div class="t ser " style="left:905px;width:84px;text-align:center;top:349px;font-size:12px;">1.8</div>
<div class="t ser " style="left:990px;width:84px;text-align:center;top:349px;font-size:12px;">$0.2</div>
<div class="t ser " style="left:1075px;width:84px;text-align:center;top:349px;font-size:12px;">0.1</div>
<div class="t ser " style="left:34px;width:52px;text-align:center;top:364px;font-size:12px;font-weight:bold;">2018</div>
<div class="t ser " style="left:87px;width:52px;text-align:center;top:364px;font-size:12px;font-weight:bold;">Q3</div>
<svg class="a" style="left:106px;top:374px" width="16" height="2"><path d="M0 1.5L1.5 0.5L3 1.5L4.5 0.5L6 1.5L7.5 0.5L9 1.5L10.5 0.5L12 1.5L13.5 0.5L15 1.5" stroke="#c01818" stroke-width="1" fill="none"/></svg>
<div class="t ser " style="left:140px;width:84px;text-align:center;top:364px;font-size:12px;">$121.6</div>
<div class="t ser " style="left:225px;width:84px;text-align:center;top:364px;font-size:12px;">8.0</div>
<div class="t ser " style="left:310px;width:84px;text-align:center;top:364px;font-size:12px;">$489.0</div>
<div class="t ser " style="left:395px;width:84px;text-align:center;top:364px;font-size:12px;">15.1</div>
<div class="t ser " style="left:480px;width:84px;text-align:center;top:364px;font-size:12px;">$529.6</div>
<div class="t ser " style="left:565px;width:84px;text-align:center;top:364px;font-size:12px;">13.8</div>
<div class="t ser " style="left:650px;width:84px;text-align:center;top:364px;font-size:12px;">$213.6</div>
<div class="t ser " style="left:735px;width:84px;text-align:center;top:364px;font-size:12px;">5.8</div>
<div class="t ser " style="left:820px;width:84px;text-align:center;top:364px;font-size:12px;">$62.5</div>
<div class="t ser " style="left:905px;width:84px;text-align:center;top:364px;font-size:12px;">1.8</div>
<div class="t ser " style="left:990px;width:84px;text-align:center;top:364px;font-size:12px;">$0.2</div>
<div class="t ser " style="left:1075px;width:84px;text-align:center;top:364px;font-size:12px;">0.1</div>
<div class="t ser " style="left:34px;width:52px;text-align:center;top:379px;font-size:12px;font-weight:bold;">2018</div>
<div class="t ser " style="left:87px;width:52px;text-align:center;top:379px;font-size:12px;font-weight:bold;">Q4</div>
<svg class="a" style="left:106px;top:389px" width="16" height="2"><path d="M0 1.5L1.5 0.5L3 1.5L4.5 0.5L6 1.5L7.5 0.5L9 1.5L10.5 0.5L12 1.5L13.5 0.5L15 1.5" stroke="#c01818" stroke-width="1" fill="none"/></svg>
<div class="t ser " style="left:140px;width:84px;text-align:center;top:379px;font-size:12px;">$125.4</div>
<div class="t ser " style="left:225px;width:84px;text-align:center;top:379px;font-size:12px;">8.5</div>
<div class="t ser " style="left:310px;width:84px;text-align:center;top:379px;font-size:12px;">$494.8</div>
<div class="t ser " style="left:395px;width:84px;text-align:center;top:379px;font-size:12px;">15.2</div>
<div class="t ser " style="left:480px;width:84px;text-align:center;top:379px;font-size:12px;">$540.3</div>
<div class="t ser " style="left:565px;width:84px;text-align:center;top:379px;font-size:12px;">14.0</div>
<div class="t ser " style="left:650px;width:84px;text-align:center;top:379px;font-size:12px;">$219.4</div>
<div class="t ser " style="left:735px;width:84px;text-align:center;top:379px;font-size:12px;">5.8</div>
<div class="t ser " style="left:820px;width:84px;text-align:center;top:379px;font-size:12px;">$65.2</div>
<div class="t ser " style="left:905px;width:84px;text-align:center;top:379px;font-size:12px;">1.9</div>
<div class="t ser " style="left:990px;width:84px;text-align:center;top:379px;font-size:12px;">$0.2</div>
<div class="t ser " style="left:1075px;width:84px;text-align:center;top:379px;font-size:12px;">0.1</div>
<div class="t ser " style="left:34px;width:52px;text-align:center;top:394px;font-size:12px;font-weight:bold;">2019</div>
<div class="t ser " style="left:87px;width:52px;text-align:center;top:394px;font-size:12px;font-weight:bold;">Q1</div>
<svg class="a" style="left:106px;top:404px" width="16" height="2"><path d="M0 1.5L1.5 0.5L3 1.5L4.5 0.5L6 1.5L7.5 0.5L9 1.5L10.5 0.5L12 1.5L13.5 0.5L15 1.5" stroke="#c01818" stroke-width="1" fill="none"/></svg>
<div class="t ser " style="left:140px;width:84px;text-align:center;top:394px;font-size:12px;">$120.1</div>
<div class="t ser " style="left:225px;width:84px;text-align:center;top:394px;font-size:12px;">8.4</div>
<div class="t ser " style="left:310px;width:84px;text-align:center;top:394px;font-size:12px;">$494.2</div>
<div class="t ser " style="left:395px;width:84px;text-align:center;top:394px;font-size:12px;">15.2</div>
<div class="t ser " style="left:480px;width:84px;text-align:center;top:394px;font-size:12px;">$548.4</div>
<div class="t ser " style="left:565px;width:84px;text-align:center;top:394px;font-size:12px;">14.1</div>
<div class="t ser " style="left:650px;width:84px;text-align:center;top:394px;font-size:12px;">$224.1</div>
<div class="t ser " style="left:735px;width:84px;text-align:center;top:394px;font-size:12px;">5.9</div>
<div class="t ser " style="left:820px;width:84px;text-align:center;top:394px;font-size:12px;">$67.8</div>
<div class="t ser " style="left:905px;width:84px;text-align:center;top:394px;font-size:12px;">1.9</div>
<div class="t ser " style="left:990px;width:84px;text-align:center;top:394px;font-size:12px;">$0.2</div>
<div class="t ser " style="left:1075px;width:84px;text-align:center;top:394px;font-size:12px;">0.1</div>
<div class="t ser " style="left:34px;width:52px;text-align:center;top:409px;font-size:12px;font-weight:bold;">2019</div>
<div class="t ser " style="left:87px;width:52px;text-align:center;top:409px;font-size:12px;font-weight:bold;">Q2</div>
<svg class="a" style="left:106px;top:419px" width="16" height="2"><path d="M0 1.5L1.5 0.5L3 1.5L4.5 0.5L6 1.5L7.5 0.5L9 1.5L10.5 0.5L12 1.5L13.5 0.5L15 1.5" stroke="#c01818" stroke-width="1" fill="none"/></svg>
<div class="t ser " style="left:140px;width:84px;text-align:center;top:409px;font-size:12px;">$124.6</div>
<div class="t ser " style="left:225px;width:84px;text-align:center;top:409px;font-size:12px;">8.1</div>
<div class="t ser " style="left:310px;width:84px;text-align:center;top:409px;font-size:12px;">$497.6</div>
<div class="t ser " style="left:395px;width:84px;text-align:center;top:409px;font-size:12px;">15.1</div>
<div class="t ser " style="left:480px;width:84px;text-align:center;top:409px;font-size:12px;">$557.6</div>
<div class="t ser " style="left:565px;width:84px;text-align:center;top:409px;font-size:12px;">14.1</div>
<div class="t ser " style="left:650px;width:84px;text-align:center;top:409px;font-size:12px;">$230.4</div>
<div class="t ser " style="left:735px;width:84px;text-align:center;top:409px;font-size:12px;">5.9</div>
<div class="t ser " style="left:820px;width:84px;text-align:center;top:409px;font-size:12px;">$70.4</div>
<div class="t ser " style="left:905px;width:84px;text-align:center;top:409px;font-size:12px;">2.0</div>
<div class="t ser " style="left:990px;width:84px;text-align:center;top:409px;font-size:12px;">$0.2</div>
<div class="t ser " style="left:1075px;width:84px;text-align:center;top:409px;font-size:12px;">0.1</div>
<div class="t ser " style="left:34px;width:52px;text-align:center;top:424px;font-size:12px;font-weight:bold;">2019</div>
<div class="t ser " style="left:87px;width:52px;text-align:center;top:424px;font-size:12px;font-weight:bold;">Q3</div>
<svg class="a" style="left:106px;top:434px" width="16" height="2"><path d="M0 1.5L1.5 0.5L3 1.5L4.5 0.5L6 1.5L7.5 0.5L9 1.5L10.5 0.5L12 1.5L13.5 0.5L15 1.5" stroke="#c01818" stroke-width="1" fill="none"/></svg>
<div class="t ser " style="left:140px;width:84px;text-align:center;top:424px;font-size:12px;">$117.3</div>
<div class="t ser " style="left:225px;width:84px;text-align:center;top:424px;font-size:12px;">7.8</div>
<div class="t ser " style="left:310px;width:84px;text-align:center;top:424px;font-size:12px;">$497.0</div>
<div class="t ser " style="left:395px;width:84px;text-align:center;top:424px;font-size:12px;">15.0</div>
<div class="t ser " style="left:480px;width:84px;text-align:center;top:424px;font-size:12px;">$564.0</div>
<div class="t ser " style="left:565px;width:84px;text-align:center;top:424px;font-size:12px;">14.0</div>
<div class="t ser " style="left:650px;width:84px;text-align:center;top:424px;font-size:12px;">$234.1</div>
<div class="t ser " style="left:735px;width:84px;text-align:center;top:424px;font-size:12px;">5.9</div>
<div class="t ser " style="left:820px;width:84px;text-align:center;top:424px;font-size:12px;">$72.9</div>
<div class="t ser " style="left:905px;width:84px;text-align:center;top:424px;font-size:12px;">2.0</div>
<div class="t ser " style="left:990px;width:84px;text-align:center;top:424px;font-size:12px;">$0.2</div>
<div class="t ser " style="left:1075px;width:84px;text-align:center;top:424px;font-size:12px;">0.1</div>
<div class="t ser " style="left:34px;width:52px;text-align:center;top:439px;font-size:12px;font-weight:bold;">2019</div>
<div class="t ser " style="left:87px;width:52px;text-align:center;top:439px;font-size:12px;font-weight:bold;">Q4</div>
<svg class="a" style="left:106px;top:449px" width="16" height="2"><path d="M0 1.5L1.5 0.5L3 1.5L4.5 0.5L6 1.5L7.5 0.5L9 1.5L10.5 0.5L12 1.5L13.5 0.5L15 1.5" stroke="#c01818" stroke-width="1" fill="none"/></svg>
<div class="t ser " style="left:140px;width:84px;text-align:center;top:439px;font-size:12px;">$121.2</div>
<div class="t ser " style="left:225px;width:84px;text-align:center;top:439px;font-size:12px;">8.2</div>
<div class="t ser " style="left:310px;width:84px;text-align:center;top:439px;font-size:12px;">$501.5</div>
<div class="t ser " style="left:395px;width:84px;text-align:center;top:439px;font-size:12px;">15.0</div>
<div class="t ser " style="left:480px;width:84px;text-align:center;top:439px;font-size:12px;">$575.5</div>
<div class="t ser " style="left:565px;width:84px;text-align:center;top:439px;font-size:12px;">14.1</div>
<div class="t ser " style="left:650px;width:84px;text-align:center;top:439px;font-size:12px;">$241.2</div>
<div class="t ser " style="left:735px;width:84px;text-align:center;top:439px;font-size:12px;">6.0</div>
<div class="t ser " style="left:820px;width:84px;text-align:center;top:439px;font-size:12px;">$75.9</div>
<div class="t ser " style="left:905px;width:84px;text-align:center;top:439px;font-size:12px;">2.1</div>
<div class="t ser " style="left:990px;width:84px;text-align:center;top:439px;font-size:12px;">$0.2</div>
<div class="t ser " style="left:1075px;width:84px;text-align:center;top:439px;font-size:12px;">0.1</div>
<div class="t ser " style="left:34px;width:52px;text-align:center;top:454px;font-size:12px;font-weight:bold;">2020</div>
<div class="t ser " style="left:87px;width:52px;text-align:center;top:454px;font-size:12px;font-weight:bold;">Q1</div>
<svg class="a" style="left:106px;top:464px" width="16" height="2"><path d="M0 1.5L1.5 0.5L3 1.5L4.5 0.5L6 1.5L7.5 0.5L9 1.5L10.5 0.5L12 1.5L13.5 0.5L15 1.5" stroke="#c01818" stroke-width="1" fill="none"/></svg>
<div class="t ser " style="left:140px;width:84px;text-align:center;top:454px;font-size:12px;">$116.1</div>
<div class="t ser " style="left:225px;width:84px;text-align:center;top:454px;font-size:12px;">8.1</div>
<div class="t ser " style="left:310px;width:84px;text-align:center;top:454px;font-size:12px;">$498.1</div>
<div class="t ser " style="left:395px;width:84px;text-align:center;top:454px;font-size:12px;">14.9</div>
<div class="t ser " style="left:480px;width:84px;text-align:center;top:454px;font-size:12px;">$581.2</div>
<div class="t ser " style="left:565px;width:84px;text-align:center;top:454px;font-size:12px;">14.1</div>
<div class="t ser " style="left:650px;width:84px;text-align:center;top:454px;font-size:12px;">$245.5</div>
<div class="t ser " style="left:735px;width:84px;text-align:center;top:454px;font-size:12px;">6.0</div>
<div class="t ser " style="left:820px;width:84px;text-align:center;top:454px;font-size:12px;">$78.5</div>
<div class="t ser " style="left:905px;width:84px;text-align:center;top:454px;font-size:12px;">2.1</div>
<div class="t ser " style="left:990px;width:84px;text-align:center;top:454px;font-size:12px;">$0.3</div>
<div class="t ser " style="left:1075px;width:84px;text-align:center;top:454px;font-size:12px;">0.1</div>
<div class="t ser " style="left:34px;width:52px;text-align:center;top:469px;font-size:12px;font-weight:bold;">2020</div>
<div class="t ser " style="left:87px;width:52px;text-align:center;top:469px;font-size:12px;font-weight:bold;">Q2</div>
<svg class="a" style="left:106px;top:479px" width="16" height="2"><path d="M0 1.5L1.5 0.5L3 1.5L4.5 0.5L6 1.5L7.5 0.5L9 1.5L10.5 0.5L12 1.5L13.5 0.5L15 1.5" stroke="#c01818" stroke-width="1" fill="none"/></svg>
<div class="t ser " style="left:140px;width:84px;text-align:center;top:469px;font-size:12px;">$120.2</div>
<div class="t ser " style="left:225px;width:84px;text-align:center;top:469px;font-size:12px;">7.9</div>
<div class="t ser " style="left:310px;width:84px;text-align:center;top:469px;font-size:12px;">$500.1</div>
<div class="t ser " style="left:395px;width:84px;text-align:center;top:469px;font-size:12px;">14.8</div>
<div class="t ser " style="left:480px;width:84px;text-align:center;top:469px;font-size:12px;">$589.8</div>
<div class="t ser " style="left:565px;width:84px;text-align:center;top:469px;font-size:12px;">14.1</div>
<div class="t ser " style="left:650px;width:84px;text-align:center;top:469px;font-size:12px;">$252.6</div>
<div class="t ser " style="left:735px;width:84px;text-align:center;top:469px;font-size:12px;">6.0</div>
<div class="t ser " style="left:820px;width:84px;text-align:center;top:469px;font-size:12px;">$81.4</div>
<div class="t ser " style="left:905px;width:84px;text-align:center;top:469px;font-size:12px;">2.2</div>
<div class="t ser " style="left:990px;width:84px;text-align:center;top:469px;font-size:12px;">$0.3</div>
<div class="t ser " style="left:1075px;width:84px;text-align:center;top:469px;font-size:12px;">0.1</div>
<div class="t ser " style="left:34px;width:52px;text-align:center;top:484px;font-size:12px;font-weight:bold;">2020</div>
<div class="t ser " style="left:87px;width:52px;text-align:center;top:484px;font-size:12px;font-weight:bold;">Q3</div>
<svg class="a" style="left:106px;top:494px" width="16" height="2"><path d="M0 1.5L1.5 0.5L3 1.5L4.5 0.5L6 1.5L7.5 0.5L9 1.5L10.5 0.5L12 1.5L13.5 0.5L15 1.5" stroke="#c01818" stroke-width="1" fill="none"/></svg>
<div class="t ser " style="left:140px;width:84px;text-align:center;top:484px;font-size:12px;">$112.8</div>
<div class="t ser " style="left:225px;width:84px;text-align:center;top:484px;font-size:12px;">7.5</div>
<div class="t ser " style="left:310px;width:84px;text-align:center;top:484px;font-size:12px;">$498.0</div>
<div class="t ser " style="left:395px;width:84px;text-align:center;top:484px;font-size:12px;">14.8</div>
<div class="t ser " style="left:480px;width:84px;text-align:center;top:484px;font-size:12px;">$594.5</div>
<div class="t ser " style="left:565px;width:84px;text-align:center;top:484px;font-size:12px;">14.1</div>
<div class="t ser " style="left:650px;width:84px;text-align:center;top:484px;font-size:12px;">$256.1</div>
<div class="t ser " style="left:735px;width:84px;text-align:center;top:484px;font-size:12px;">6.1</div>
<div class="t ser " style="left:820px;width:84px;text-align:center;top:484px;font-size:12px;">$83.8</div>
<div class="t ser " style="left:905px;width:84px;text-align:center;top:484px;font-size:12px;">2.2</div>
<div class="t ser " style="left:990px;width:84px;text-align:center;top:484px;font-size:12px;">$0.3</div>
<div class="t ser " style="left:1075px;width:84px;text-align:center;top:484px;font-size:12px;">0.1</div>
<div class="t ser " style="left:34px;width:52px;text-align:center;top:499px;font-size:12px;font-weight:bold;">2020</div>
<div class="t ser " style="left:87px;width:52px;text-align:center;top:499px;font-size:12px;font-weight:bold;">Q4</div>
<svg class="a" style="left:106px;top:509px" width="16" height="2"><path d="M0 1.5L1.5 0.5L3 1.5L4.5 0.5L6 1.5L7.5 0.5L9 1.5L10.5 0.5L12 1.5L13.5 0.5L15 1.5" stroke="#c01818" stroke-width="1" fill="none"/></svg>
<div class="t ser " style="left:140px;width:84px;text-align:center;top:499px;font-size:12px;">$115.5</div>
<div class="t ser " style="left:225px;width:84px;text-align:center;top:499px;font-size:12px;">7.8</div>
<div class="t ser " style="left:310px;width:84px;text-align:center;top:499px;font-size:12px;">$500.5</div>
<div class="t ser " style="left:395px;width:84px;text-align:center;top:499px;font-size:12px;">14.8</div>
<div class="t ser " style="left:480px;width:84px;text-align:center;top:499px;font-size:12px;">$601.7</div>
<div class="t ser " style="left:565px;width:84px;text-align:center;top:499px;font-size:12px;">14.2</div>
<div class="t ser " style="left:650px;width:84px;text-align:center;top:499px;font-size:12px;">$262.2</div>
<div class="t ser " style="left:735px;width:84px;text-align:center;top:499px;font-size:12px;">6.2</div>
<div class="t ser " style="left:820px;width:84px;text-align:center;top:499px;font-size:12px;">$86.8</div>
<div class="t ser " style="left:905px;width:84px;text-align:center;top:499px;font-size:12px;">2.3</div>
<div class="t ser " style="left:990px;width:84px;text-align:center;top:499px;font-size:12px;">$0.3</div>
<div class="t ser " style="left:1075px;width:84px;text-align:center;top:499px;font-size:12px;">0.1</div>
<div class="t ser " style="left:34px;width:52px;text-align:center;top:514px;font-size:12px;font-weight:bold;">2021</div>
<div class="t ser " style="left:87px;width:52px;text-align:center;top:514px;font-size:12px;font-weight:bold;">Q1</div>
<svg class="a" style="left:106px;top:524px" width="16" height="2"><path d="M0 1.5L1.5 0.5L3 1.5L4.5 0.5L6 1.5L7.5 0.5L9 1.5L10.5 0.5L12 1.5L13.5 0.5L15 1.5" stroke="#c01818" stroke-width="1" fill="none"/></svg>
<div class="t ser " style="left:140px;width:84px;text-align:center;top:514px;font-size:12px;">$109.0</div>
<div class="t ser " style="left:225px;width:84px;text-align:center;top:514px;font-size:12px;">7.7</div>
<div class="t ser " style="left:310px;width:84px;text-align:center;top:514px;font-size:12px;">$496.3</div>
<div class="t ser " style="left:395px;width:84px;text-align:center;top:514px;font-size:12px;">14.8</div>
<div class="t ser " style="left:480px;width:84px;text-align:center;top:514px;font-size:12px;">$604.9</div>
<div class="t ser " style="left:565px;width:84px;text-align:center;top:514px;font-size:12px;">14.3</div>
<div class="t ser " style="left:650px;width:84px;text-align:center;top:514px;font-size:12px;">$266.5</div>
<div class="t ser " style="left:735px;width:84px;text-align:center;top:514px;font-size:12px;">6.2</div>
<div class="t ser " style="left:820px;width:84px;text-align:center;top:514px;font-size:12px;">$89.5</div>
<div class="t ser " style="left:905px;width:84px;text-align:center;top:514px;font-size:12px;">2.3</div>
<div class="t ser " style="left:990px;width:84px;text-align:center;top:514px;font-size:12px;">$0.3</div>
<div class="t ser " style="left:1075px;width:84px;text-align:center;top:514px;font-size:12px;">0.1</div>
<div class="t ser " style="left:34px;width:52px;text-align:center;top:529px;font-size:12px;font-weight:bold;">2021</div>
<div class="t ser " style="left:87px;width:52px;text-align:center;top:529px;font-size:12px;font-weight:bold;">Q2</div>
<svg class="a" style="left:106px;top:539px" width="16" height="2"><path d="M0 1.5L1.5 0.5L3 1.5L4.5 0.5L6 1.5L7.5 0.5L9 1.5L10.5 0.5L12 1.5L13.5 0.5L15 1.5" stroke="#c01818" stroke-width="1" fill="none"/></svg>
<div class="t ser " style="left:140px;width:84px;text-align:center;top:529px;font-size:12px;">$113.7</div>
<div class="t ser " style="left:225px;width:84px;text-align:center;top:529px;font-size:12px;">7.5</div>
<div class="t ser " style="left:310px;width:84px;text-align:center;top:529px;font-size:12px;">$500.6</div>
<div class="t ser " style="left:395px;width:84px;text-align:center;top:529px;font-size:12px;">14.9</div>
<div class="t ser " style="left:480px;width:84px;text-align:center;top:529px;font-size:12px;">$613.0</div>
<div class="t ser " style="left:565px;width:84px;text-align:center;top:529px;font-size:12px;">14.3</div>
<div class="t ser " style="left:650px;width:84px;text-align:center;top:529px;font-size:12px;">$273.7</div>
<div class="t ser " style="left:735px;width:84px;text-align:center;top:529px;font-size:12px;">6.3</div>
<div class="t ser " style="left:820px;width:84px;text-align:center;top:529px;font-size:12px;">$92.7</div>
<div class="t ser " style="left:905px;width:84px;text-align:center;top:529px;font-size:12px;">2.4</div>
<div class="t ser " style="left:990px;width:84px;text-align:center;top:529px;font-size:12px;">$0.3</div>
<div class="t ser " style="left:1075px;width:84px;text-align:center;top:529px;font-size:12px;">0.1</div>
<div class="t ser" style="left:35px;top:545px;font-size:10px">Notes:</div>
<div class="t ser" style="left:35px;top:559px;font-size:10px">Due to rounding and timing differences, the total figures may differ slightly from those in the Portfolio Summary report.</div>
<div class="a" style="left:1261px;top:145px;width:19px;height:552px;background:#f4f3ee"></div>
<div class="a" style="left:1261px;top:147px;width:17px;height:3px;background:#000"></div>
<div class="a" style="left:1262px;top:151px;width:16px;height:16px;border:1px solid #fff;border-radius:2px;background:linear-gradient(135deg,#dce6fc,#bccdf6)"><svg class="a" style="left:0;top:0" width="14" height="14"><path d="M3 9L7 5L11 9" stroke="#4d6185" stroke-width="2" fill="none"/></svg></div>
<div class="a" style="left:1263px;top:167px;width:14px;height:248px;border:1px solid #fff;border-radius:2px;background:linear-gradient(90deg,#c6d6fc,#b4c8f6)"></div>
<div class="a" style="left:1266px;top:287px;width:8px;height:1px;background:#8aa0d8"></div>
<div class="a" style="left:1266px;top:289px;width:8px;height:1px;background:#8aa0d8"></div>
<div class="a" style="left:1266px;top:291px;width:8px;height:1px;background:#8aa0d8"></div>
<div class="a" style="left:1266px;top:293px;width:8px;height:1px;background:#8aa0d8"></div>
<div class="a" style="left:1262px;top:681px;width:16px;height:16px;border:1px solid #fff;border-radius:2px;background:linear-gradient(135deg,#dce6fc,#bccdf6)"><svg class="a" style="left:0;top:0" width="14" height="14"><path d="M3 5L7 9L11 5" stroke="#4d6185" stroke-width="2" fill="none"/></svg></div>
<div class="a" style="left:0;top:696px;width:1280px;height:22px;background:#ece9d8"></div>
<div class="a" style="left:35px;top:696px;width:1226px;height:1px;background:#d8d4c8"></div>
<div class="a" style="left:4px;top:698px;width:13px;height:15px;border:1px solid #d8d4c4;border-radius:2px;background:#f0eee6"><svg class="a" style="left:0;top:0" width="13" height="15"><path d="M3.5 4V11" stroke="#b0b0a8"/><path d="M10 4V11L5 7.5Z" fill="#b8b8b0"/></svg></div>
<div class="a" style="left:21px;top:698px;width:13px;height:15px;border:1px solid #d8d4c4;border-radius:2px;background:#f0eee6"><svg class="a" style="left:0;top:0" width="13" height="15"><path d="M9 4V11L4 7.5Z" fill="#b8b8b0"/></svg></div>
<div class="a" style="left:38px;top:698px;width:13px;height:15px;border:1px solid #d8d4c4;border-radius:2px;background:#f0eee6"><svg class="a" style="left:0;top:0" width="13" height="15"><path d="M4 4V11L9 7.5Z" fill="#b8b8b0"/></svg></div>
<div class="a" style="left:54px;top:698px;width:13px;height:15px;border:1px solid #d8d4c4;border-radius:2px;background:#f0eee6"><svg class="a" style="left:0;top:0" width="13" height="15"><path d="M3 4V11L8 7.5Z" fill="#b8b8b0"/><path d="M9.5 4V11" stroke="#b0b0a8"/></svg></div>
<svg class="a" style="left:70px;top:697px" width="200" height="17"><path d="M0 0L8 16L100 16L106 0Z" fill="#fff" stroke="#6a6858"/><path d="M106 0L98 16L170 16L177 0Z" fill="#f0eee6" stroke="#8a8878"/></svg>
<div class="t" style="left:78px;top:701px;font-size:11px;font-weight:bold;letter-spacing:0.35px">Portfolio by Age</div>
<div class="t" style="left:182px;top:701px;font-size:11px">Definitions</div>
<div class="a" style="left:763px;top:697px;width:7px;height:17px;background:#fafaf6;border:1px solid #6a6858;border-top:none"></div>
<div class="a" style="left:770px;top:697px;width:491px;height:17px;background:#f8f8f4;border-bottom:1px solid #c8c8c0"></div>
<div class="a" style="left:770px;top:698px;width:16px;height:15px;border:1px solid #fff;border-radius:2px;background:linear-gradient(135deg,#dce6fc,#bccdf6)"><svg class="a" style="left:0;top:0" width="14" height="13"><path d="M9 3L5 7L9 11" stroke="#4d6185" stroke-width="2" fill="none"/></svg></div>
<div class="a" style="left:786px;top:698px;width:212px;height:15px;border:1px solid #fff;border-radius:2px;background:linear-gradient(#c6d6fc,#b4c8f6)"></div>
<div class="a" style="left:888px;top:702px;width:1px;height:7px;background:#8aa0d8"></div>
<div class="a" style="left:890px;top:702px;width:1px;height:7px;background:#8aa0d8"></div>
<div class="a" style="left:892px;top:702px;width:1px;height:7px;background:#8aa0d8"></div>
<div class="a" style="left:894px;top:702px;width:1px;height:7px;background:#8aa0d8"></div>
<div class="a" style="left:1242px;top:698px;width:15px;height:15px;border:1px solid #fff;border-radius:2px;background:linear-gradient(135deg,#dce6fc,#bccdf6)"><svg class="a" style="left:0;top:0" width="13" height="13"><path d="M5 3L9 7L5 11" stroke="#4d6185" stroke-width="2" fill="none"/></svg></div>
<div class="a" style="left:1258px;top:697px;width:3px;height:17px;background:#000"></div>
<div class="a" style="left:0;top:714px;width:1280px;height:25px;background:#ece9d8"></div>
<div class="a" style="left:6px;top:718px;width:224px;height:19px;border:1px solid #b4b0a0;border-radius:2px;background:#ece9d8"></div>
<div class="t" style="left:10px;top:724px;font-size:11px">Sheet 1 / 2</div>
<div class="a" style="left:235px;top:718px;width:295px;height:19px;border:1px solid #b4b0a0;border-radius:2px;background:#ece9d8"></div>
<div class="t" style="left:239px;top:724px;font-size:11px">PageStyle_Portfolio by Age</div>
<div class="a" style="left:535px;top:718px;width:50px;height:19px;border:1px solid #b4b0a0;border-radius:2px;background:#ece9d8"></div>
<div class="a" style="left:589px;top:718px;width:43px;height:19px;border:1px solid #b4b0a0;border-radius:2px;background:#ece9d8"></div>
<div class="t" style="left:589px;width:43px;text-align:center;top:724px;font-size:11px">STD</div>
<div class="a" style="left:636px;top:718px;width:27px;height:19px;border:1px solid #b4b0a0;border-radius:2px;background:#ece9d8"></div>
<div class="a" style="left:667px;top:718px;width:25px;height:19px;border:1px solid #b4b0a0;border-radius:2px;background:#ece9d8"></div>
<div class="a" style="left:696px;top:718px;width:377px;height:19px;border:1px solid #b4b0a0;border-radius:2px;background:#ece9d8"></div>
<div class="t" style="left:696px;width:377px;text-align:center;top:724px;font-size:11px">Sum=0</div>
<div class="a" style="left:1078px;top:718px;width:149px;height:19px;border:1px solid #b4b0a0;border-radius:2px;background:#ece9d8"></div>
<div class="a" style="left:1232px;top:718px;width:43px;height:19px;border:1px solid #b4b0a0;border-radius:2px;background:#ece9d8"></div>
<div class="a" style="left:1083px;top:722px;width:11px;height:11px;border:1px solid #5a6a80;border-radius:50%;background:#e8ecf4"></div><div class="a" style="left:1086px;top:727px;width:5px;height:1px;background:#304060"></div>
<div class="a" style="left:1100px;top:727px;width:34px;height:1px;background:#6a7080"></div>
<div class="a" style="left:1131px;top:724px;width:9px;height:9px;border:1px solid #4a5a70;border-radius:50%;background:#8aa0b8"></div>
<div class="a" style="left:1145px;top:721px;width:134px;height:17px;background:#ffffe1;border:1px solid #000"></div>
<div class="t" style="left:1147px;top:725px;font-size:11px">Tuesday, August 03, 2021</div>
<div class="a" style="left:0;top:738px;width:1280px;height:30px;background:linear-gradient(#3a7cf2 0%,#245edc 12%,#2860e0 50%,#2456d4 90%,#1a48b8 100%)"></div>
<div class="a" style="left:0;top:738px;width:97px;height:30px;border-radius:0 10px 10px 0;background:linear-gradient(#5cb85c 0%,#3c9a3c 15%,#389438 70%,#2a7a2a 100%)"></div>
<div class="t" style="left:34px;top:744px;font-size:17px;font-weight:bold;font-style:italic;color:#fff;text-shadow:1px 1px #1a4a1a">start</div>
<svg class="a" style="left:10px;top:743px" width="20" height="19"><path d="M3 1.5Q6 0 10 1.5L8.5 8.5Q5 7 1.5 8.5Z" fill="#f05a20"/><path d="M11 2Q15 3.5 18 2L16.5 9Q13 10.5 9.5 9Z" fill="#70c030"/><path d="M1.3 9.5Q5 8 8.3 9.5L7 16.5Q3.5 15 0 16.5Z" fill="#3a80f0"/><path d="M9.3 10Q13 11.5 16.3 10L15 17Q11.5 18.5 8 17Z" fill="#f8c020"/></svg>
<div class="a" style="left:107px;top:742px;width:148px;height:24px;border-radius:3px;background:linear-gradient(#4a8cf8,#3c80f4 15%,#3878ec 80%,#2c68dc)"></div>
<div class="t" style="left:145px;top:749px;font-size:11px;letter-spacing:0.2px;color:#fff">Opera Internet ...</div>
<svg class="a" style="left:245px;top:752px" width="7" height="4"><path d="M0 0H7L3.5 3.5Z" fill="#fff"/></svg>
<svg class="a" style="left:115px;top:745px" width="17" height="17"><ellipse cx="8" cy="8" rx="6" ry="7" fill="none" stroke="#e02020" stroke-width="3.2"/></svg><div class="t" style="left:135px;top:749px;font-size:11px;font-weight:bold;color:#c8c8d8">3</div>
<div class="a" style="left:257px;top:742px;width:147px;height:24px;border-radius:3px;background:linear-gradient(#4a8cf8,#3c80f4 15%,#3878ec 80%,#2c68dc)"></div>
<div class="t" style="left:286px;top:749px;font-size:11px;letter-spacing:0.2px;color:#fff">I:\ContractWithAm...</div>
<svg class="a" style="left:266px;top:745px" width="17" height="15"><path d="M1 2H6L7 4H14V13H1Z" fill="#f0c040" stroke="#a07010"/><path d="M1 13L3.5 6H16L13.5 13Z" fill="#fce080" stroke="#a07010"/></svg>
<div class="a" style="left:407px;top:742px;width:148px;height:24px;border-radius:3px;background:linear-gradient(#4a8cf8,#3c80f4 15%,#3878ec 80%,#2c68dc)"></div>
<div class="t" style="left:436px;top:749px;font-size:11px;letter-spacing:0.2px;color:#fff">G:\ContractWithAm...</div>
<svg class="a" style="left:416px;top:745px" width="17" height="15"><path d="M1 2H6L7 4H14V13H1Z" fill="#f0c040" stroke="#a07010"/><path d="M1 13L3.5 6H16L13.5 13Z" fill="#fce080" stroke="#a07010"/></svg>
<div class="a" style="left:557px;top:742px;width:148px;height:24px;border-radius:3px;background:linear-gradient(#4a8cf8,#3c80f4 15%,#3878ec 80%,#2c68dc)"></div>
<div class="t" style="left:586px;top:749px;font-size:11px;letter-spacing:0.2px;color:#fff">C:\Documents and ...</div>
<svg class="a" style="left:566px;top:745px" width="17" height="15"><path d="M1 2H6L7 4H14V13H1Z" fill="#f0c040" stroke="#a07010"/><path d="M1 13L3.5 6H16L13.5 13Z" fill="#fce080" stroke="#a07010"/></svg>
<div class="a" style="left:708px;top:742px;width:147px;height:24px;border-radius:3px;background:linear-gradient(#4a8cf8,#3c80f4 15%,#3878ec 80%,#2c68dc)"></div>
<div class="t" style="left:737px;top:749px;font-size:11px;letter-spacing:0.2px;color:#fff">slj-age-notes.doc - ...</div>
<svg class="a" style="left:719px;top:744px" width="16" height="17"><path d="M1.5 3.5H11L14.5 7V15.5H1.5Z" fill="#f4f4f4" stroke="#404040"/><path d="M3 7H12M3 9H12M3 11H12M3 13H10" stroke="#303030"/><path d="M1 4L8 1L13 3" stroke="#a0a0b0" stroke-width="1.5" fill="none"/></svg>
<div class="a" style="left:856px;top:742px;width:150px;height:24px;border-radius:3px;background:linear-gradient(#1c44a8,#1e50b8 20%,#1c4cb4)"></div>
<div class="t" style="left:885px;top:749px;font-size:11px;letter-spacing:0.2px;color:#fff">Portfolio-by-Age (3...</div>
<svg class="a" style="left:868px;top:744px" width="16" height="17"><path d="M1.5 4.5L8 2L13 4V15.5H1.5Z" fill="#e8f0d8" stroke="#303030"/><path d="M2 6L7 3.5L13 5" stroke="#a0a0b0" stroke-width="1.5" fill="none"/><rect x="5" y="9" width="7" height="6" fill="#f0f070" stroke="#607010"/><path d="M8.5 9V15M5 12H12" stroke="#607010"/></svg>
<div class="a" style="left:1007px;top:742px;width:148px;height:24px;border-radius:3px;background:linear-gradient(#4a8cf8,#3c80f4 15%,#3878ec 80%,#2c68dc)"></div>
<div class="t" style="left:1036px;top:749px;font-size:11px;letter-spacing:0.2px;color:#fff">DeptOfEd-Debt-ch...</div>
<svg class="a" style="left:1016px;top:744px" width="16" height="18"><path d="M2 5H14L12 17H4Z" fill="#d8d8e8" stroke="#505060"/><path d="M5 1L7 10M8 2L9 10M11 1L10 10" stroke="#e04020" stroke-width="2"/><path d="M6 2L8 10" stroke="#40a040" stroke-width="1.5"/></svg>
<div class="a" style="left:1169px;top:738px;width:111px;height:30px;background:linear-gradient(#2aa0f8,#0c8af0 20%,#0a86ec 80%,#0870d8);border-left:1px solid #1060c0"></div>
<div class="a" style="left:1161px;top:745px;width:17px;height:17px;border-radius:50%;background:radial-gradient(circle at 40% 35%,#9ad0fc,#3a8ae8);border:1px solid #c8e4ff"></div><svg class="a" style="left:1161px;top:745px" width="17" height="17"><path d="M10 4.5L6 8.5L10 12.5" stroke="#fff" stroke-width="2.2" fill="none"/></svg>
<svg class="a" style="left:1180px;top:745px" width="17" height="16"><rect x="1" y="2" width="6" height="9" fill="#c8d8f0" stroke="#5070a0"/><rect x="1" y="11" width="7" height="3" fill="#e0e0e8"/><path d="M9 4Q11 7 9 10M11.5 2.5Q14.5 7 11.5 11.5M14 1Q18 7 14 13" stroke="#fff" stroke-width="1.3" fill="none"/></svg>
<svg class="a" style="left:1198px;top:745px" width="16" height="16"><rect x="0" y="0" width="8" height="8" fill="#f0a020"/><rect x="8" y="0" width="8" height="8" fill="#2a70b0"/><rect x="0" y="8" width="8" height="8" fill="#40a040"/><rect x="8" y="8" width="8" height="8" fill="#d83020"/></svg>
<div class="t" style="left:1221px;top:749px;font-size:11px;color:#fff">11:09 AM</div>
</body></html>
